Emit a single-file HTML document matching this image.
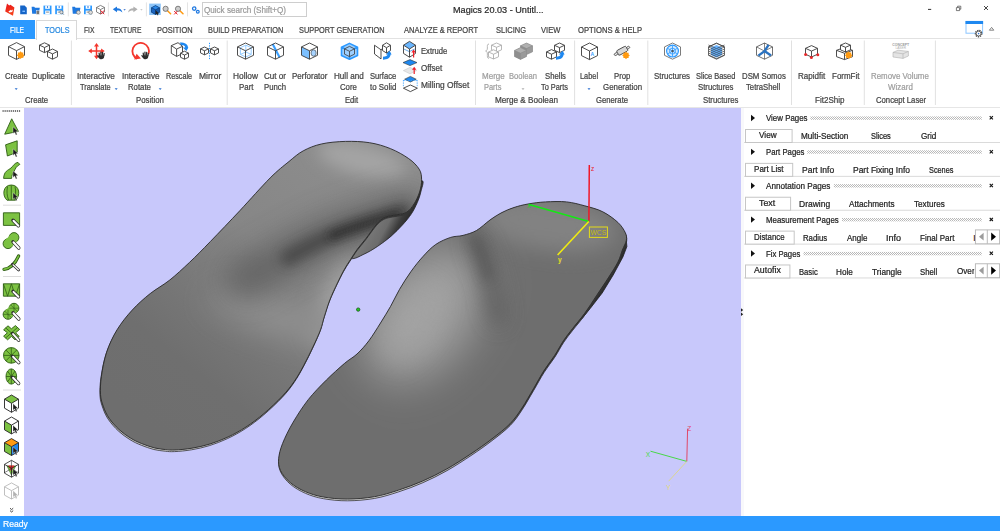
<!DOCTYPE html>
<html><head><meta charset="utf-8"><title>Magics 20.03</title>
<style>
html,body{margin:0;padding:0;}
body{width:1000px;height:531px;overflow:hidden;background:#fff;position:relative;font-family:"Liberation Sans",sans-serif;}
.t{position:absolute;white-space:nowrap;transform-origin:0 50%;display:block;-webkit-text-stroke:0.22px currentColor;}
.a{position:absolute;}
svg{position:absolute;left:0;top:0;overflow:visible;}
</style></head><body>
<div class="a" style="left:0;top:0;width:1000px;height:531px;background:#fff"></div>
<div class="a" style="left:24px;top:108px;width:717px;height:408px;background:#c8c8fb"></div>
<div class="a" style="left:0;top:107px;width:1000px;height:1px;background:#e6e6e6"></div>
<div class="a" style="left:0;top:516px;width:1000px;height:15px;background:#2b99ff"></div>
<div class="a" style="left:0;top:38px;width:1000px;height:1px;background:#e2e2e2"></div>
<div class="a" style="left:0;top:20px;width:35px;height:18.5px;background:#2b99ff"></div>
<div class="a" style="left:36px;top:20px;width:39px;height:19px;background:#fff;border:1px solid #d8d8d8;border-bottom:none"></div>
<div class="a" style="left:201.5px;top:2px;width:103px;height:13px;border:1px solid #cecece;background:#fff"></div>
<svg width="1000" height="531" viewBox="0 0 1000 531">
<defs>
<clipPath id="vp"><rect x="24" y="108" width="717" height="408"/></clipPath>
<clipPath id="cL"><path d="M100.5,394.5C100.2,389.4 100.4,383.4 101.4,376.4C102.4,369.4 104.0,360.1 106.6,352.3C109.2,344.5 112.8,336.7 117.1,329.7C121.4,322.7 126.7,316.1 132.2,310.1C137.7,304.1 143.9,298.6 150.2,293.6C156.5,288.6 163.3,285.2 169.8,280.0C176.3,274.8 182.6,268.9 189.4,262.5C196.2,256.1 202.1,250.1 210.5,241.4C218.9,232.7 230.1,221.1 240.0,210.5C249.9,199.9 261.9,186.2 270.1,178.0C278.3,169.8 283.5,166.0 289.0,161.5C294.5,157.0 297.9,153.7 303.3,150.8C308.7,147.9 314.3,145.6 321.3,144.0C328.3,142.4 337.4,141.6 345.4,141.4C353.4,141.2 362.0,141.5 369.5,142.7C377.0,143.9 384.1,146.0 390.6,148.7C397.1,151.3 403.9,155.2 408.7,158.6C413.5,162.0 417.0,165.7 419.2,169.2C421.4,172.7 421.5,175.9 421.6,179.7C421.7,183.5 420.9,187.9 419.6,192.0C418.3,196.1 416.1,200.7 414.0,204.0C411.9,207.3 409.7,210.2 407.0,212.0C404.3,213.8 401.0,213.9 398.0,214.6C395.0,215.3 391.5,215.4 388.8,216.2C386.1,217.0 384.3,217.6 382.0,219.2C379.7,220.8 377.8,222.8 375.2,226.0C372.6,229.2 369.2,234.3 366.2,238.2C363.2,242.1 359.7,245.9 357.1,249.5C354.5,253.1 352.6,256.3 350.4,259.7C348.2,263.1 346.1,266.1 344.0,270.0C341.9,273.9 339.9,277.9 337.5,282.9C335.1,287.9 332.1,294.1 329.9,299.8C327.7,305.5 325.9,311.8 324.3,316.8C322.7,321.8 322.4,324.9 320.5,329.9C318.6,334.9 315.8,340.9 313.0,346.9C310.2,352.9 306.7,359.9 303.6,365.7C300.5,371.5 297.7,376.4 294.2,381.5C290.7,386.6 287.5,390.7 282.5,396.0C277.5,401.3 270.1,408.3 264.0,413.5C257.9,418.7 252.0,423.1 246.0,427.0C240.0,430.9 234.0,434.2 228.0,437.0C222.0,439.8 216.0,442.1 210.0,444.0C204.0,445.9 197.8,447.2 192.0,448.2C186.2,449.2 179.4,449.8 175.0,450.0C170.6,450.2 169.1,450.0 165.7,449.6C162.3,449.2 158.4,448.9 154.4,447.9C150.4,446.9 145.7,445.2 141.7,443.6C137.7,442.0 134.2,440.4 130.4,438.0C126.6,435.6 122.5,432.8 119.0,429.5C115.5,426.2 111.7,422.0 109.1,418.2C106.5,414.4 104.9,410.8 103.5,406.9C102.1,402.9 100.8,399.6 100.5,394.5Z"/></clipPath>
<clipPath id="cR"><path d="M278.7,458.4C279.1,453.9 280.2,449.4 282.6,443.4C285.0,437.4 288.8,429.6 293.1,422.3C297.4,415.0 302.7,406.7 308.2,399.7C313.7,392.7 320.3,386.1 326.3,380.1C332.3,374.1 339.2,368.0 344.3,363.6C349.4,359.2 352.9,357.8 357.0,354.0C361.1,350.2 365.1,345.8 369.0,340.6C372.9,335.4 376.9,328.7 380.5,323.0C384.1,317.3 387.3,312.1 390.5,306.5C393.7,300.9 396.1,295.2 399.5,289.4C402.9,283.6 407.1,277.0 411.0,271.5C414.9,266.0 418.9,261.0 423.0,256.5C427.1,252.0 431.1,247.7 435.7,244.5C440.3,241.3 446.1,238.9 450.7,237.4C455.2,235.9 458.7,236.6 463.0,235.4C467.3,234.2 472.0,233.1 476.5,230.5C481.0,227.9 485.8,223.0 490.0,220.0C494.2,217.0 498.0,214.6 502.0,212.5C506.0,210.4 509.7,208.9 514.0,207.5C518.3,206.1 522.8,204.9 528.0,204.0C533.2,203.1 539.1,202.2 545.5,201.9C551.9,201.6 560.1,201.2 566.6,201.9C573.1,202.6 578.7,204.2 584.7,205.8C590.7,207.5 597.3,209.0 602.8,211.8C608.3,214.6 614.1,218.9 617.9,222.4C621.7,225.9 624.0,229.9 625.4,232.9C626.8,235.9 626.8,237.7 626.3,240.5C625.8,243.3 623.8,246.4 622.4,250.0C621.0,253.6 620.2,257.6 617.9,262.1C615.6,266.6 612.3,271.6 608.8,277.1C605.3,282.6 600.8,289.2 596.8,295.2C592.8,301.2 588.7,307.8 584.7,313.3C580.7,318.8 576.2,323.9 572.7,328.4C569.2,332.9 566.6,336.0 563.6,340.5C560.6,345.0 557.9,350.5 554.6,355.5C551.3,360.5 547.5,365.1 544.0,370.6C540.5,376.1 537.2,382.5 533.5,388.7C529.8,394.9 525.9,402.1 522.0,408.0C518.1,413.9 515.0,418.7 510.0,423.8C505.0,428.9 498.4,433.9 491.9,438.9C485.4,443.9 478.3,448.9 470.8,453.9C463.3,458.9 454.7,464.5 446.7,469.0C438.7,473.5 430.7,477.5 422.7,481.0C414.7,484.5 406.6,487.5 398.6,490.1C390.6,492.7 383.1,495.2 374.5,496.7C365.9,498.2 355.8,499.1 347.3,499.1C338.8,499.2 330.3,498.2 323.3,497.0C316.3,495.8 310.7,494.0 305.2,491.6C299.7,489.2 294.2,486.0 290.1,482.5C286.0,479.0 282.4,474.5 280.5,470.5C278.6,466.5 278.3,462.9 278.7,458.4Z"/></clipPath>
<filter id="b4" filterUnits="userSpaceOnUse" x="0" y="100" width="800" height="450"><feGaussianBlur stdDeviation="4"/></filter>
<filter id="b6" filterUnits="userSpaceOnUse" x="0" y="100" width="800" height="450"><feGaussianBlur stdDeviation="6"/></filter>
<filter id="b10" filterUnits="userSpaceOnUse" x="0" y="100" width="800" height="450"><feGaussianBlur stdDeviation="10"/></filter>
<filter id="b8" filterUnits="userSpaceOnUse" x="0" y="100" width="800" height="450"><feGaussianBlur stdDeviation="8"/></filter>
<filter id="b14" filterUnits="userSpaceOnUse" x="0" y="100" width="800" height="450"><feGaussianBlur stdDeviation="14"/></filter>
<filter id="b22" filterUnits="userSpaceOnUse" x="0" y="100" width="800" height="450"><feGaussianBlur stdDeviation="22"/></filter>
<linearGradient id="gLu" x1="422" y1="196" x2="392" y2="180" gradientUnits="userSpaceOnUse"><stop offset="0" stop-color="#2a2a2a"/><stop offset="0.22" stop-color="#3c3c3c"/><stop offset="0.5" stop-color="#6c6c6c"/><stop offset="1" stop-color="#7c7c7c"/></linearGradient>
<linearGradient id="gL" x1="370" y1="150" x2="150" y2="425" gradientUnits="userSpaceOnUse"><stop offset="0" stop-color="#8e8e8e"/><stop offset="0.4" stop-color="#868686"/><stop offset="0.62" stop-color="#787878"/><stop offset="0.8" stop-color="#6f6f6f"/><stop offset="1" stop-color="#6e6e6e"/></linearGradient>
<clipPath id="eL"><rect x="90" y="385" width="230" height="80"/></clipPath><clipPath id="eR"><rect x="270" y="395" width="270" height="120"/></clipPath>
<linearGradient id="geL" x1="0" y1="385" x2="0" y2="450" gradientUnits="userSpaceOnUse"><stop offset="0" stop-color="#3a3a3a"/><stop offset="0.45" stop-color="#909090"/><stop offset="1" stop-color="#d4d4d4"/></linearGradient>
<linearGradient id="geR" x1="0" y1="400" x2="0" y2="500" gradientUnits="userSpaceOnUse"><stop offset="0" stop-color="#3a3a3a"/><stop offset="0.4" stop-color="#8a8a8a"/><stop offset="1" stop-color="#d8d8d8"/></linearGradient>
</defs>
<g clip-path="url(#vp)">
<path d="M421.6,181.0C425.1,179.7 421.5,188.4 420.8,192.0C420.1,195.6 418.9,198.9 417.3,202.5C415.7,206.1 413.9,210.1 411.4,213.8C408.9,217.6 405.8,221.3 402.4,225.0C399.0,228.7 395.2,232.6 391.1,236.2C387.0,239.8 382.0,243.4 377.5,246.4C373.0,249.4 368.3,252.2 363.9,254.2C359.5,256.2 355.0,259.3 351.0,258.6C347.0,257.9 338.5,255.6 340.0,250.0C341.5,244.4 350.0,233.3 360.0,225.0C370.0,216.7 389.7,207.3 400.0,200.0C410.3,192.7 418.1,182.3 421.6,181.0Z" fill="url(#gLu)" stroke="#222" stroke-width="0.8"/>
<path d="M100.5,394.5C100.2,389.4 100.4,383.4 101.4,376.4C102.4,369.4 104.0,360.1 106.6,352.3C109.2,344.5 112.8,336.7 117.1,329.7C121.4,322.7 126.7,316.1 132.2,310.1C137.7,304.1 143.9,298.6 150.2,293.6C156.5,288.6 163.3,285.2 169.8,280.0C176.3,274.8 182.6,268.9 189.4,262.5C196.2,256.1 202.1,250.1 210.5,241.4C218.9,232.7 230.1,221.1 240.0,210.5C249.9,199.9 261.9,186.2 270.1,178.0C278.3,169.8 283.5,166.0 289.0,161.5C294.5,157.0 297.9,153.7 303.3,150.8C308.7,147.9 314.3,145.6 321.3,144.0C328.3,142.4 337.4,141.6 345.4,141.4C353.4,141.2 362.0,141.5 369.5,142.7C377.0,143.9 384.1,146.0 390.6,148.7C397.1,151.3 403.9,155.2 408.7,158.6C413.5,162.0 417.0,165.7 419.2,169.2C421.4,172.7 421.5,175.9 421.6,179.7C421.7,183.5 420.9,187.9 419.6,192.0C418.3,196.1 416.1,200.7 414.0,204.0C411.9,207.3 409.7,210.2 407.0,212.0C404.3,213.8 401.0,213.9 398.0,214.6C395.0,215.3 391.5,215.4 388.8,216.2C386.1,217.0 384.3,217.6 382.0,219.2C379.7,220.8 377.8,222.8 375.2,226.0C372.6,229.2 369.2,234.3 366.2,238.2C363.2,242.1 359.7,245.9 357.1,249.5C354.5,253.1 352.6,256.3 350.4,259.7C348.2,263.1 346.1,266.1 344.0,270.0C341.9,273.9 339.9,277.9 337.5,282.9C335.1,287.9 332.1,294.1 329.9,299.8C327.7,305.5 325.9,311.8 324.3,316.8C322.7,321.8 322.4,324.9 320.5,329.9C318.6,334.9 315.8,340.9 313.0,346.9C310.2,352.9 306.7,359.9 303.6,365.7C300.5,371.5 297.7,376.4 294.2,381.5C290.7,386.6 287.5,390.7 282.5,396.0C277.5,401.3 270.1,408.3 264.0,413.5C257.9,418.7 252.0,423.1 246.0,427.0C240.0,430.9 234.0,434.2 228.0,437.0C222.0,439.8 216.0,442.1 210.0,444.0C204.0,445.9 197.8,447.2 192.0,448.2C186.2,449.2 179.4,449.8 175.0,450.0C170.6,450.2 169.1,450.0 165.7,449.6C162.3,449.2 158.4,448.9 154.4,447.9C150.4,446.9 145.7,445.2 141.7,443.6C137.7,442.0 134.2,440.4 130.4,438.0C126.6,435.6 122.5,432.8 119.0,429.5C115.5,426.2 111.7,422.0 109.1,418.2C106.5,414.4 104.9,410.8 103.5,406.9C102.1,402.9 100.8,399.6 100.5,394.5Z" transform="translate(-0.5,1.6)" fill="url(#geL)" stroke="#333" stroke-width="0.8"/>
<path d="M100.5,394.5C100.2,389.4 100.4,383.4 101.4,376.4C102.4,369.4 104.0,360.1 106.6,352.3C109.2,344.5 112.8,336.7 117.1,329.7C121.4,322.7 126.7,316.1 132.2,310.1C137.7,304.1 143.9,298.6 150.2,293.6C156.5,288.6 163.3,285.2 169.8,280.0C176.3,274.8 182.6,268.9 189.4,262.5C196.2,256.1 202.1,250.1 210.5,241.4C218.9,232.7 230.1,221.1 240.0,210.5C249.9,199.9 261.9,186.2 270.1,178.0C278.3,169.8 283.5,166.0 289.0,161.5C294.5,157.0 297.9,153.7 303.3,150.8C308.7,147.9 314.3,145.6 321.3,144.0C328.3,142.4 337.4,141.6 345.4,141.4C353.4,141.2 362.0,141.5 369.5,142.7C377.0,143.9 384.1,146.0 390.6,148.7C397.1,151.3 403.9,155.2 408.7,158.6C413.5,162.0 417.0,165.7 419.2,169.2C421.4,172.7 421.5,175.9 421.6,179.7C421.7,183.5 420.9,187.9 419.6,192.0C418.3,196.1 416.1,200.7 414.0,204.0C411.9,207.3 409.7,210.2 407.0,212.0C404.3,213.8 401.0,213.9 398.0,214.6C395.0,215.3 391.5,215.4 388.8,216.2C386.1,217.0 384.3,217.6 382.0,219.2C379.7,220.8 377.8,222.8 375.2,226.0C372.6,229.2 369.2,234.3 366.2,238.2C363.2,242.1 359.7,245.9 357.1,249.5C354.5,253.1 352.6,256.3 350.4,259.7C348.2,263.1 346.1,266.1 344.0,270.0C341.9,273.9 339.9,277.9 337.5,282.9C335.1,287.9 332.1,294.1 329.9,299.8C327.7,305.5 325.9,311.8 324.3,316.8C322.7,321.8 322.4,324.9 320.5,329.9C318.6,334.9 315.8,340.9 313.0,346.9C310.2,352.9 306.7,359.9 303.6,365.7C300.5,371.5 297.7,376.4 294.2,381.5C290.7,386.6 287.5,390.7 282.5,396.0C277.5,401.3 270.1,408.3 264.0,413.5C257.9,418.7 252.0,423.1 246.0,427.0C240.0,430.9 234.0,434.2 228.0,437.0C222.0,439.8 216.0,442.1 210.0,444.0C204.0,445.9 197.8,447.2 192.0,448.2C186.2,449.2 179.4,449.8 175.0,450.0C170.6,450.2 169.1,450.0 165.7,449.6C162.3,449.2 158.4,448.9 154.4,447.9C150.4,446.9 145.7,445.2 141.7,443.6C137.7,442.0 134.2,440.4 130.4,438.0C126.6,435.6 122.5,432.8 119.0,429.5C115.5,426.2 111.7,422.0 109.1,418.2C106.5,414.4 104.9,410.8 103.5,406.9C102.1,402.9 100.8,399.6 100.5,394.5Z" fill="url(#gL)"/>
<g clip-path="url(#cL)">
<ellipse cx="362" cy="160" rx="46" ry="15" fill="#a4a4a4" filter="url(#b8)" transform="rotate(14 362 160)"/>
<path d="M350,268 C337,288 328,308 322,332" fill="none" stroke="#a2a2a2" stroke-width="24" stroke-linecap="round" filter="url(#b10)"/>
<ellipse cx="280" cy="316" rx="72" ry="20" fill="#8e8e8e" filter="url(#b14)" transform="rotate(16 280 316)"/>
<path d="M408,208 C385,217 345,226 314,242 C295,252 275,262 245,280" fill="none" stroke="#505050" stroke-width="40" stroke-linecap="round" filter="url(#b14)" opacity="0.55"/>
<path d="M404,211 C385,218 348,227 320,241 C308,247 298,252 288,258" fill="none" stroke="#3c3c3c" stroke-width="16" stroke-linecap="round" filter="url(#b6)" opacity="0.7"/>
<path d="M398,214 C380,220 352,227 332,236" fill="none" stroke="#2c2c2c" stroke-width="7" stroke-linecap="round" filter="url(#b4)" opacity="0.85"/>
</g>
<path d="M100.5,394.5C100.2,389.4 100.4,383.4 101.4,376.4C102.4,369.4 104.0,360.1 106.6,352.3C109.2,344.5 112.8,336.7 117.1,329.7C121.4,322.7 126.7,316.1 132.2,310.1C137.7,304.1 143.9,298.6 150.2,293.6C156.5,288.6 163.3,285.2 169.8,280.0C176.3,274.8 182.6,268.9 189.4,262.5C196.2,256.1 202.1,250.1 210.5,241.4C218.9,232.7 230.1,221.1 240.0,210.5C249.9,199.9 261.9,186.2 270.1,178.0C278.3,169.8 283.5,166.0 289.0,161.5C294.5,157.0 297.9,153.7 303.3,150.8C308.7,147.9 314.3,145.6 321.3,144.0C328.3,142.4 337.4,141.6 345.4,141.4C353.4,141.2 362.0,141.5 369.5,142.7C377.0,143.9 384.1,146.0 390.6,148.7C397.1,151.3 403.9,155.2 408.7,158.6C413.5,162.0 417.0,165.7 419.2,169.2C421.4,172.7 421.5,175.9 421.6,179.7C421.7,183.5 420.9,187.9 419.6,192.0C418.3,196.1 416.1,200.7 414.0,204.0C411.9,207.3 409.7,210.2 407.0,212.0C404.3,213.8 401.0,213.9 398.0,214.6C395.0,215.3 391.5,215.4 388.8,216.2C386.1,217.0 384.3,217.6 382.0,219.2C379.7,220.8 377.8,222.8 375.2,226.0C372.6,229.2 369.2,234.3 366.2,238.2C363.2,242.1 359.7,245.9 357.1,249.5C354.5,253.1 352.6,256.3 350.4,259.7C348.2,263.1 346.1,266.1 344.0,270.0C341.9,273.9 339.9,277.9 337.5,282.9C335.1,287.9 332.1,294.1 329.9,299.8C327.7,305.5 325.9,311.8 324.3,316.8C322.7,321.8 322.4,324.9 320.5,329.9C318.6,334.9 315.8,340.9 313.0,346.9C310.2,352.9 306.7,359.9 303.6,365.7C300.5,371.5 297.7,376.4 294.2,381.5C290.7,386.6 287.5,390.7 282.5,396.0C277.5,401.3 270.1,408.3 264.0,413.5C257.9,418.7 252.0,423.1 246.0,427.0C240.0,430.9 234.0,434.2 228.0,437.0C222.0,439.8 216.0,442.1 210.0,444.0C204.0,445.9 197.8,447.2 192.0,448.2C186.2,449.2 179.4,449.8 175.0,450.0C170.6,450.2 169.1,450.0 165.7,449.6C162.3,449.2 158.4,448.9 154.4,447.9C150.4,446.9 145.7,445.2 141.7,443.6C137.7,442.0 134.2,440.4 130.4,438.0C126.6,435.6 122.5,432.8 119.0,429.5C115.5,426.2 111.7,422.0 109.1,418.2C106.5,414.4 104.9,410.8 103.5,406.9C102.1,402.9 100.8,399.6 100.5,394.5Z" fill="none" stroke="#2a2a2a" stroke-width="0.9"/>
<path d="M626.3,240.5 L626.9,246.5 L622.9,257 L613.2,275 L602.2,293 L590.2,308.5 L582,318.5 L584.7,313.3 L596.8,295.2 L608.8,277.1 L617.9,262.1 L622.4,250Z" fill="#2e2e2e" stroke="#222" stroke-width="0.8"/>
<path d="M278.7,458.4C279.1,453.9 280.2,449.4 282.6,443.4C285.0,437.4 288.8,429.6 293.1,422.3C297.4,415.0 302.7,406.7 308.2,399.7C313.7,392.7 320.3,386.1 326.3,380.1C332.3,374.1 339.2,368.0 344.3,363.6C349.4,359.2 352.9,357.8 357.0,354.0C361.1,350.2 365.1,345.8 369.0,340.6C372.9,335.4 376.9,328.7 380.5,323.0C384.1,317.3 387.3,312.1 390.5,306.5C393.7,300.9 396.1,295.2 399.5,289.4C402.9,283.6 407.1,277.0 411.0,271.5C414.9,266.0 418.9,261.0 423.0,256.5C427.1,252.0 431.1,247.7 435.7,244.5C440.3,241.3 446.1,238.9 450.7,237.4C455.2,235.9 458.7,236.6 463.0,235.4C467.3,234.2 472.0,233.1 476.5,230.5C481.0,227.9 485.8,223.0 490.0,220.0C494.2,217.0 498.0,214.6 502.0,212.5C506.0,210.4 509.7,208.9 514.0,207.5C518.3,206.1 522.8,204.9 528.0,204.0C533.2,203.1 539.1,202.2 545.5,201.9C551.9,201.6 560.1,201.2 566.6,201.9C573.1,202.6 578.7,204.2 584.7,205.8C590.7,207.5 597.3,209.0 602.8,211.8C608.3,214.6 614.1,218.9 617.9,222.4C621.7,225.9 624.0,229.9 625.4,232.9C626.8,235.9 626.8,237.7 626.3,240.5C625.8,243.3 623.8,246.4 622.4,250.0C621.0,253.6 620.2,257.6 617.9,262.1C615.6,266.6 612.3,271.6 608.8,277.1C605.3,282.6 600.8,289.2 596.8,295.2C592.8,301.2 588.7,307.8 584.7,313.3C580.7,318.8 576.2,323.9 572.7,328.4C569.2,332.9 566.6,336.0 563.6,340.5C560.6,345.0 557.9,350.5 554.6,355.5C551.3,360.5 547.5,365.1 544.0,370.6C540.5,376.1 537.2,382.5 533.5,388.7C529.8,394.9 525.9,402.1 522.0,408.0C518.1,413.9 515.0,418.7 510.0,423.8C505.0,428.9 498.4,433.9 491.9,438.9C485.4,443.9 478.3,448.9 470.8,453.9C463.3,458.9 454.7,464.5 446.7,469.0C438.7,473.5 430.7,477.5 422.7,481.0C414.7,484.5 406.6,487.5 398.6,490.1C390.6,492.7 383.1,495.2 374.5,496.7C365.9,498.2 355.8,499.1 347.3,499.1C338.8,499.2 330.3,498.2 323.3,497.0C316.3,495.8 310.7,494.0 305.2,491.6C299.7,489.2 294.2,486.0 290.1,482.5C286.0,479.0 282.4,474.5 280.5,470.5C278.6,466.5 278.3,462.9 278.7,458.4Z" transform="translate(0.2,1.7)" fill="url(#geR)" stroke="#333" stroke-width="0.8"/>
<path d="M278.7,458.4C279.1,453.9 280.2,449.4 282.6,443.4C285.0,437.4 288.8,429.6 293.1,422.3C297.4,415.0 302.7,406.7 308.2,399.7C313.7,392.7 320.3,386.1 326.3,380.1C332.3,374.1 339.2,368.0 344.3,363.6C349.4,359.2 352.9,357.8 357.0,354.0C361.1,350.2 365.1,345.8 369.0,340.6C372.9,335.4 376.9,328.7 380.5,323.0C384.1,317.3 387.3,312.1 390.5,306.5C393.7,300.9 396.1,295.2 399.5,289.4C402.9,283.6 407.1,277.0 411.0,271.5C414.9,266.0 418.9,261.0 423.0,256.5C427.1,252.0 431.1,247.7 435.7,244.5C440.3,241.3 446.1,238.9 450.7,237.4C455.2,235.9 458.7,236.6 463.0,235.4C467.3,234.2 472.0,233.1 476.5,230.5C481.0,227.9 485.8,223.0 490.0,220.0C494.2,217.0 498.0,214.6 502.0,212.5C506.0,210.4 509.7,208.9 514.0,207.5C518.3,206.1 522.8,204.9 528.0,204.0C533.2,203.1 539.1,202.2 545.5,201.9C551.9,201.6 560.1,201.2 566.6,201.9C573.1,202.6 578.7,204.2 584.7,205.8C590.7,207.5 597.3,209.0 602.8,211.8C608.3,214.6 614.1,218.9 617.9,222.4C621.7,225.9 624.0,229.9 625.4,232.9C626.8,235.9 626.8,237.7 626.3,240.5C625.8,243.3 623.8,246.4 622.4,250.0C621.0,253.6 620.2,257.6 617.9,262.1C615.6,266.6 612.3,271.6 608.8,277.1C605.3,282.6 600.8,289.2 596.8,295.2C592.8,301.2 588.7,307.8 584.7,313.3C580.7,318.8 576.2,323.9 572.7,328.4C569.2,332.9 566.6,336.0 563.6,340.5C560.6,345.0 557.9,350.5 554.6,355.5C551.3,360.5 547.5,365.1 544.0,370.6C540.5,376.1 537.2,382.5 533.5,388.7C529.8,394.9 525.9,402.1 522.0,408.0C518.1,413.9 515.0,418.7 510.0,423.8C505.0,428.9 498.4,433.9 491.9,438.9C485.4,443.9 478.3,448.9 470.8,453.9C463.3,458.9 454.7,464.5 446.7,469.0C438.7,473.5 430.7,477.5 422.7,481.0C414.7,484.5 406.6,487.5 398.6,490.1C390.6,492.7 383.1,495.2 374.5,496.7C365.9,498.2 355.8,499.1 347.3,499.1C338.8,499.2 330.3,498.2 323.3,497.0C316.3,495.8 310.7,494.0 305.2,491.6C299.7,489.2 294.2,486.0 290.1,482.5C286.0,479.0 282.4,474.5 280.5,470.5C278.6,466.5 278.3,462.9 278.7,458.4Z" fill="#6e6e6e"/>
<g clip-path="url(#cR)">
<ellipse cx="424" cy="314" rx="48" ry="76" fill="#a2a2a2" filter="url(#b22)" transform="rotate(36 424 314)"/>
<ellipse cx="408" cy="322" rx="22" ry="40" fill="#a4a4a4" filter="url(#b14)" transform="rotate(32 408 322)" opacity="0.5"/>
<ellipse cx="548" cy="224" rx="70" ry="26" fill="#828282" filter="url(#b10)" transform="rotate(8 548 224)"/>
<path d="M476,240 C484,258 492,280 498,318" fill="none" stroke="#5a5a5a" stroke-width="17" stroke-linecap="round" filter="url(#b10)" opacity="0.8"/>
<path d="M474,238 C480,250 485,262 488,276" fill="none" stroke="#505050" stroke-width="8" stroke-linecap="round" filter="url(#b6)" opacity="0.7"/>
</g>
<path d="M278.7,458.4C279.1,453.9 280.2,449.4 282.6,443.4C285.0,437.4 288.8,429.6 293.1,422.3C297.4,415.0 302.7,406.7 308.2,399.7C313.7,392.7 320.3,386.1 326.3,380.1C332.3,374.1 339.2,368.0 344.3,363.6C349.4,359.2 352.9,357.8 357.0,354.0C361.1,350.2 365.1,345.8 369.0,340.6C372.9,335.4 376.9,328.7 380.5,323.0C384.1,317.3 387.3,312.1 390.5,306.5C393.7,300.9 396.1,295.2 399.5,289.4C402.9,283.6 407.1,277.0 411.0,271.5C414.9,266.0 418.9,261.0 423.0,256.5C427.1,252.0 431.1,247.7 435.7,244.5C440.3,241.3 446.1,238.9 450.7,237.4C455.2,235.9 458.7,236.6 463.0,235.4C467.3,234.2 472.0,233.1 476.5,230.5C481.0,227.9 485.8,223.0 490.0,220.0C494.2,217.0 498.0,214.6 502.0,212.5C506.0,210.4 509.7,208.9 514.0,207.5C518.3,206.1 522.8,204.9 528.0,204.0C533.2,203.1 539.1,202.2 545.5,201.9C551.9,201.6 560.1,201.2 566.6,201.9C573.1,202.6 578.7,204.2 584.7,205.8C590.7,207.5 597.3,209.0 602.8,211.8C608.3,214.6 614.1,218.9 617.9,222.4C621.7,225.9 624.0,229.9 625.4,232.9C626.8,235.9 626.8,237.7 626.3,240.5C625.8,243.3 623.8,246.4 622.4,250.0C621.0,253.6 620.2,257.6 617.9,262.1C615.6,266.6 612.3,271.6 608.8,277.1C605.3,282.6 600.8,289.2 596.8,295.2C592.8,301.2 588.7,307.8 584.7,313.3C580.7,318.8 576.2,323.9 572.7,328.4C569.2,332.9 566.6,336.0 563.6,340.5C560.6,345.0 557.9,350.5 554.6,355.5C551.3,360.5 547.5,365.1 544.0,370.6C540.5,376.1 537.2,382.5 533.5,388.7C529.8,394.9 525.9,402.1 522.0,408.0C518.1,413.9 515.0,418.7 510.0,423.8C505.0,428.9 498.4,433.9 491.9,438.9C485.4,443.9 478.3,448.9 470.8,453.9C463.3,458.9 454.7,464.5 446.7,469.0C438.7,473.5 430.7,477.5 422.7,481.0C414.7,484.5 406.6,487.5 398.6,490.1C390.6,492.7 383.1,495.2 374.5,496.7C365.9,498.2 355.8,499.1 347.3,499.1C338.8,499.2 330.3,498.2 323.3,497.0C316.3,495.8 310.7,494.0 305.2,491.6C299.7,489.2 294.2,486.0 290.1,482.5C286.0,479.0 282.4,474.5 280.5,470.5C278.6,466.5 278.3,462.9 278.7,458.4Z" fill="none" stroke="#2a2a2a" stroke-width="0.9"/>
<circle cx="358.2" cy="309.6" r="1.7" fill="#22cc22" stroke="#114411" stroke-width="0.7"/>
<path d="M588.9,221.5 L589.3,165" stroke="#f01828" stroke-width="1.5" fill="none"/>
<path d="M588.8,221.5 L529,204.5" stroke="#14e814" stroke-width="1.6" fill="none"/>
<path d="M588.8,221.5 L557.6,255" stroke="#f0ec10" stroke-width="1.6" fill="none"/>
<rect x="589.4" y="227" width="18" height="10.4" fill="none" stroke="#e4dc18" stroke-width="1"/>
<text x="590.6" y="235.4" font-family="Liberation Sans, sans-serif" font-size="7" fill="#c4bc10" textLength="15.5" lengthAdjust="spacingAndGlyphs">WCS</text>
<text x="591" y="171" font-family="Liberation Sans, sans-serif" font-size="6.5" fill="#e8202a">z</text>
<text x="527.5" y="207.6" font-family="Liberation Sans, sans-serif" font-size="6.5" fill="#20d020">x</text>
<text x="558" y="262" font-family="Liberation Sans, sans-serif" font-size="6.5" font-weight="bold" fill="#e8e020">y</text>
<path d="M686.8,461.4 L687.6,428.6" stroke="#e04868" stroke-width="1" fill="none"/>
<path d="M686.8,461.4 L650.5,451.2" stroke="#48d848" stroke-width="1" fill="none"/>
<path d="M686.8,461.4 L668.6,481.2" stroke="#dcd690" stroke-width="1" fill="none"/>
<text x="687.3" y="430.5" font-family="Liberation Sans, sans-serif" font-size="6.5" fill="#e04868">Z</text>
<text x="645.8" y="456.6" font-family="Liberation Sans, sans-serif" font-size="6.5" fill="#48d848">X</text>
<text x="666.2" y="490.2" font-family="Liberation Sans, sans-serif" font-size="6.5" fill="#e4dc70">Y</text>
</g></svg>
<svg width="1000" height="531" viewBox="0 0 1000 531">
<path d="M71.4,40.5 L71.4,105" stroke="#e1e1e1" stroke-width="1"/>
<path d="M227.2,40.5 L227.2,105" stroke="#e1e1e1" stroke-width="1"/>
<path d="M475.5,40.5 L475.5,105" stroke="#e1e1e1" stroke-width="1"/>
<path d="M574.6,40.5 L574.6,105" stroke="#e1e1e1" stroke-width="1"/>
<path d="M647.8,40.5 L647.8,105" stroke="#e1e1e1" stroke-width="1"/>
<path d="M791.5,40.5 L791.5,105" stroke="#e1e1e1" stroke-width="1"/>
<path d="M864.3,40.5 L864.3,105" stroke="#e1e1e1" stroke-width="1"/>
<path d="M935.4,40.5 L935.4,105" stroke="#e1e1e1" stroke-width="1"/>
<path d="M14.7,88.2 L17.7,88.2 L16.2,89.9Z" fill="#2b6fd0"/>
<path d="M114.7,88.2 L117.7,88.2 L116.2,89.9Z" fill="#2b6fd0"/>
<path d="M158.7,88.2 L161.7,88.2 L160.2,89.9Z" fill="#2b6fd0"/>
<path d="M587.5,88.2 L590.5,88.2 L589,89.9Z" fill="#2b6fd0"/>
<path d="M521.5,88.2 L524.5,88.2 L523,89.9Z" fill="#b0b0b0"/>
<path d="M16.50,42.60 L24.50,46.63 L24.50,55.37 L16.50,59.40 L8.50,55.37 L8.50,46.63Z" fill="#fff" stroke="none"/><path d="M16.50,42.60 L24.50,46.63 L24.50,55.37 L16.50,59.40 L8.50,55.37 L8.50,46.63Z M8.50,46.63 L16.50,50.66 L24.50,46.63 M16.50,50.66 L16.50,59.40" fill="none" stroke="#3a3a3a" stroke-width="0.9" stroke-linejoin="round"/>
<polygon points="24.50,55.20 23.19,56.27 23.36,57.96 21.67,57.79 20.60,59.10 19.53,57.79 17.84,57.96 18.01,56.27 16.70,55.20 18.01,54.13 17.84,52.44 19.53,52.61 20.60,51.30 21.67,52.61 23.36,52.44 23.19,54.13" fill="#ff9a10"/>
<path d="M44.50,42.80 L49.50,45.15 L49.50,50.25 L44.50,52.60 L39.50,50.25 L39.50,45.15Z" fill="#fff" stroke="none"/><path d="M44.50,42.80 L49.50,45.15 L49.50,50.25 L44.50,52.60 L39.50,50.25 L39.50,45.15Z M39.50,45.15 L44.50,47.50 L49.50,45.15 M44.50,47.50 L44.50,52.60" fill="none" stroke="#3a3a3a" stroke-width="0.9" stroke-linejoin="round"/>
<path d="M52.50,49.00 L57.50,51.45 L57.50,56.75 L52.50,59.20 L47.50,56.75 L47.50,51.45Z" fill="#fff" stroke="none"/><path d="M52.50,49.00 L57.50,51.45 L57.50,56.75 L52.50,59.20 L47.50,56.75 L47.50,51.45Z M47.50,51.45 L52.50,53.90 L57.50,51.45 M52.50,53.90 L52.50,59.20" fill="none" stroke="#3a3a3a" stroke-width="0.9" stroke-linejoin="round"/>
<g fill="#f4362c"><path d="M96.5,45.5 L96.5,57 M90.6,50.9 L102.4,50.9" fill="none" stroke="#f4362c" stroke-width="1.5"/><path d="M96.5,43 L99,46.6 L94,46.6Z M96.5,59.3 L99,55.7 L94,55.7Z M88.2,50.9 L91.8,48.4 L91.8,53.4Z M104.7,50.9 L101.1,48.4 L101.1,53.4Z"/></g>
<g transform="translate(97,51.2) scale(1.0)" fill="#2c2c2c" stroke="#2c2c2c" stroke-linecap="round"><path d="M1.7,4 L7.3,4 L7,6.4 C6.6,7.6 5.6,8 4.4,8 C3,8 2.2,7.4 1.7,6.2Z" stroke="none"/><path d="M2.5,4.4 L2.1,1.9 M3.95,4 L3.85,0.9 M5.4,4 L5.6,1.1 M6.7,4.6 L7.2,2.5" stroke-width="1.25" fill="none"/><path d="M2.4,6.4 L0.8,4.5" stroke-width="1.3" fill="none"/></g>
<path d="M148.5,54.04 A8.3,8.3 0 1 0 137.19,58.72" fill="none" stroke="#f4362c" stroke-width="1.8"/>
<path d="M134.2,59.5 L140.9,58.6 L136.6,53.7Z" fill="#f4362c"/>
<g transform="translate(141.1,51.2) scale(1.0)" fill="#2c2c2c" stroke="#2c2c2c" stroke-linecap="round"><path d="M1.7,4 L7.3,4 L7,6.4 C6.6,7.6 5.6,8 4.4,8 C3,8 2.2,7.4 1.7,6.2Z" stroke="none"/><path d="M2.5,4.4 L2.1,1.9 M3.95,4 L3.85,0.9 M5.4,4 L5.6,1.1 M6.7,4.6 L7.2,2.5" stroke-width="1.25" fill="none"/><path d="M2.4,6.4 L0.8,4.5" stroke-width="1.3" fill="none"/></g>
<path d="M171.3,45.6 L178,42.7 L182.5,46.3 L182.5,53.6 L176.6,56.4 L171.3,53.3Z" fill="#fff" stroke="#3a3a3a" stroke-width="0.9" stroke-linejoin="round"/><path d="M171.3,45.6 L176.6,49.1 L182.5,46.3 M176.6,49.1 L176.6,56.4" fill="none" stroke="#3a3a3a" stroke-width="0.9"/>
<path d="M179.6,42.6 C184.6,42.4 187.8,44.4 188,47.4 L188.4,47.4 L186.4,50.9 L182.8,47.4 L185.2,47.4 C185,45.8 183.6,45.2 181.4,45.4Z" fill="#1e88f0"/>
<path d="M184.50,51.20 L188.50,53.12 L188.50,57.28 L184.50,59.20 L180.50,57.28 L180.50,53.12Z" fill="#fff" stroke="none"/><path d="M184.50,51.20 L188.50,53.12 L188.50,57.28 L184.50,59.20 L180.50,57.28 L180.50,53.12Z M180.50,53.12 L184.50,55.04 L188.50,53.12 M184.50,55.04 L184.50,59.20" fill="none" stroke="#3a3a3a" stroke-width="0.9" stroke-linejoin="round"/>
<path d="M204.50,47.00 L208.50,48.87 L208.50,52.93 L204.50,54.80 L200.50,52.93 L200.50,48.87Z" fill="#fff" stroke="none"/><path d="M204.50,47.00 L208.50,48.87 L208.50,52.93 L204.50,54.80 L200.50,52.93 L200.50,48.87Z M200.50,48.87 L204.50,50.74 L208.50,48.87 M204.50,50.74 L204.50,54.80" fill="none" stroke="#3a3a3a" stroke-width="0.9" stroke-linejoin="round"/>
<path d="M214.50,47.00 L218.50,48.87 L218.50,52.93 L214.50,54.80 L210.50,52.93 L210.50,48.87Z" fill="#fff" stroke="none"/><path d="M214.50,47.00 L218.50,48.87 L218.50,52.93 L214.50,54.80 L210.50,52.93 L210.50,48.87Z M210.50,48.87 L214.50,50.74 L218.50,48.87 M214.50,50.74 L214.50,54.80" fill="none" stroke="#3a3a3a" stroke-width="0.9" stroke-linejoin="round"/>
<path d="M209.5,42.8 L209.5,59.4" stroke="#2b99ff" stroke-width="1" stroke-dasharray="1.3,1.2"/>
<path d="M245.50,43.00 L253.50,46.89 L253.50,55.31 L245.50,59.20 L237.50,55.31 L237.50,46.89Z" fill="#fff" stroke="none"/><path d="M240.4,47.6 L240.4,54.4 L245.8,57 L251.2,54.4 L251.2,47.6 L245.8,45.2Z M240.4,54.4 L245.8,52 L251.2,54.4 M245.8,52 L245.8,45.2" fill="none" stroke="#7cc0ff" stroke-width="0.8"/><path d="M245.50,43.00 L253.50,46.89 L253.50,55.31 L245.50,59.20 L237.50,55.31 L237.50,46.89Z M237.50,46.89 L245.50,50.78 L253.50,46.89 M245.50,50.78 L245.50,59.20" fill="none" stroke="#3a3a3a" stroke-width="0.9" stroke-linejoin="round"/>
<path d="M275.50,43.00 L283.50,46.89 L283.50,55.31 L275.50,59.20 L267.50,55.31 L267.50,46.89Z" fill="#fff" stroke="none"/><path d="M271.6,44.2 L273.6,43.4 L280.6,57 L278.6,57.8Z" fill="#3aa0ff"/><path d="M275.50,43.00 L283.50,46.89 L283.50,55.31 L275.50,59.20 L267.50,55.31 L267.50,46.89Z M267.50,46.89 L275.50,50.78 L283.50,46.89 M275.50,50.78 L275.50,59.20" fill="none" stroke="#3a3a3a" stroke-width="0.9" stroke-linejoin="round"/>
<path d="M309.50,43.00 L317.50,46.89 L317.50,55.31 L309.50,59.20 L301.50,55.31 L301.50,46.89Z" fill="#fff" stroke="none"/><path d="M301.50,46.89 L309.50,50.78 L309.50,59.20 L301.50,55.31Z" fill="#7cc0ff"/><ellipse cx="313.6" cy="53" rx="2.6" ry="3.2" fill="#a8d4ff" stroke="#3a3a3a" stroke-width="0.6"/><path d="M309.50,43.00 L317.50,46.89 L317.50,55.31 L309.50,59.20 L301.50,55.31 L301.50,46.89Z M301.50,46.89 L309.50,50.78 L317.50,46.89 M309.50,50.78 L309.50,59.20" fill="none" stroke="#3a3a3a" stroke-width="0.9" stroke-linejoin="round"/>
<path d="M349.50,43.40 L357.50,47.19 L357.50,55.41 L349.50,59.20 L341.50,55.41 L341.50,47.19Z" fill="#9ccfff" stroke="none"/><path d="M349.50,43.40 L357.50,47.19 L357.50,55.41 L349.50,59.20 L341.50,55.41 L341.50,47.19Z M341.50,47.19 L349.50,50.98 L357.50,47.19 M349.50,50.98 L349.50,59.20" fill="none" stroke="#2b99ff" stroke-width="1.6" stroke-linejoin="round"/>
<path d="M349.50,46.40 L354.50,48.85 L354.50,54.15 L349.50,56.60 L344.50,54.15 L344.50,48.85Z" fill="#9ccfff" stroke="none"/><path d="M349.50,46.40 L354.50,48.85 L354.50,54.15 L349.50,56.60 L344.50,54.15 L344.50,48.85Z M344.50,48.85 L349.50,51.30 L354.50,48.85 M349.50,51.30 L349.50,56.60" fill="none" stroke="#3a3a3a" stroke-width="0.8" stroke-linejoin="round"/>
<path d="M374.5,45.2 L374.5,54 L381,58.9 L381,49.8Z M381,49.8 L382.4,48.6" fill="#fff" stroke="#3a3a3a" stroke-width="0.9" stroke-linejoin="round"/>
<path d="M386.50,42.80 L390.50,45.25 L390.50,50.55 L386.50,53.00 L382.50,50.55 L382.50,45.25Z" fill="#fff" stroke="none"/><path d="M386.50,42.80 L390.50,45.25 L390.50,50.55 L386.50,53.00 L382.50,50.55 L382.50,45.25Z M382.50,45.25 L386.50,47.70 L390.50,45.25 M386.50,47.70 L386.50,53.00" fill="none" stroke="#3a3a3a" stroke-width="0.9" stroke-linejoin="round"/>
<path d="M383,56.8 C386,56.8 387.4,55.8 387.6,54.6 L385.8,54.6 L389.6,50.8 L391.6,54.6 L390.6,54.6 C390.4,58 387,59.8 383,59.8Z" fill="#1e88f0"/>
<path d="M409.50,41.40 L415.50,45.19 L415.50,53.41 L409.50,57.20 L403.50,53.41 L403.50,45.19Z" fill="#fff" stroke="none"/><path d="M409.50,41.40 L415.50,45.19 L409.50,48.98 L403.50,45.19Z" fill="#6ab6ff"/><path d="M403.8,49 L409.3,51.6 L414.8,49" fill="none" stroke="#2b88e0" stroke-width="0.7"/><path d="M409.50,41.40 L415.50,45.19 L415.50,53.41 L409.50,57.20 L403.50,53.41 L403.50,45.19Z M403.50,45.19 L409.50,48.98 L415.50,45.19 M409.50,48.98 L409.50,57.20" fill="none" stroke="#3a3a3a" stroke-width="0.9" stroke-linejoin="round"/>
<path d="M413.6,57.6 L413.6,51.6" stroke="#f0202a" stroke-width="1.2"/><path d="M413.6,49.4 L415.8,52.4 L411.4,52.4Z" fill="#f0202a"/>
<path d="M403,62.6 L410,59.6 L417,62.6 L410,65.6Z" fill="#1e88f0" stroke="#333" stroke-width="0.6"/>
<path d="M403.4,70.6 L410,67.4 L416.6,70.6 L410,73.8Z" fill="#e8e8e8" stroke="#c8c8c8" stroke-width="0.6"/>
<path d="M414.2,74 L414.2,69" stroke="#f0202a" stroke-width="1.2"/><path d="M414.2,66.8 L416.4,69.8 L412,69.8Z" fill="#f0202a"/>
<path d="M404.6,79.2 L410.4,76.4 L416.2,79.2 L410.4,82Z" fill="#1e88f0" stroke="#333" stroke-width="0.6"/>
<path d="M403.4,80 L403.4,86.6 M417.2,80 L417.2,86.6 M403.4,80.4 L417.2,80.4" fill="none" stroke="#3aa0ff" stroke-width="0.8" stroke-dasharray="1.4,1"/>
<path d="M403.4,88.2 L410.4,85 L417.4,88.2 L410.4,91.6Z" fill="#fff" stroke="#222" stroke-width="0.8"/>
<path d="M489,44 C487,44 487.4,46 487.4,48 C487.4,50 486.6,50.8 485.6,51 C486.6,51.2 487.4,52 487.4,54 C487.4,56 487,58.4 489,58.4" fill="none" stroke="#a4a4a4" stroke-width="0.8"/>
<path d="M496.50,43.00 L501.50,45.16 L501.50,49.84 L496.50,52.00 L491.50,49.84 L491.50,45.16Z" fill="#fff" stroke="none"/><path d="M496.50,43.00 L501.50,45.16 L501.50,49.84 L496.50,52.00 L491.50,49.84 L491.50,45.16Z M491.50,45.16 L496.50,47.32 L501.50,45.16 M496.50,47.32 L496.50,52.00" fill="none" stroke="#a4a4a4" stroke-width="0.8" stroke-linejoin="round"/>
<path d="M493.50,49.80 L498.50,52.01 L498.50,56.79 L493.50,59.00 L488.50,56.79 L488.50,52.01Z" fill="#fff" stroke="none"/><path d="M493.50,49.80 L498.50,52.01 L498.50,56.79 L493.50,59.00 L488.50,56.79 L488.50,52.01Z M488.50,52.01 L493.50,54.22 L498.50,52.01 M493.50,54.22 L493.50,59.00" fill="none" stroke="#a4a4a4" stroke-width="0.8" stroke-linejoin="round"/>
<path d="M526.50,43.00 L532.50,45.78 L532.50,51.82 L526.50,54.60 L520.50,51.82 L520.50,45.78Z" fill="#a4a4a4" stroke="none"/><path d="M526.50,43.00 L532.50,45.78 L526.50,48.57 L520.50,45.78Z" fill="#b0b0b0"/><path d="M520.50,45.78 L526.50,48.57 L526.50,54.60 L520.50,51.82Z" fill="#8e8e8e"/><path d="M532.50,45.78 L526.50,48.57 L526.50,54.60 L532.50,51.82Z" fill="#9a9a9a"/><path d="M526.50,43.00 L532.50,45.78 L532.50,51.82 L526.50,54.60 L520.50,51.82 L520.50,45.78Z M520.50,45.78 L526.50,48.57 L532.50,45.78 M526.50,48.57 L526.50,54.60" fill="none" stroke="#8c8c8c" stroke-width="0.6" stroke-linejoin="round"/>
<path d="M520.50,47.60 L526.50,50.43 L526.50,56.57 L520.50,59.40 L514.50,56.57 L514.50,50.43Z" fill="#a4a4a4" stroke="none"/><path d="M520.50,47.60 L526.50,50.43 L520.50,53.26 L514.50,50.43Z" fill="#b0b0b0"/><path d="M514.50,50.43 L520.50,53.26 L520.50,59.40 L514.50,56.57Z" fill="#8e8e8e"/><path d="M526.50,50.43 L520.50,53.26 L520.50,59.40 L526.50,56.57Z" fill="#9a9a9a"/><path d="M520.50,47.60 L526.50,50.43 L526.50,56.57 L520.50,59.40 L514.50,56.57 L514.50,50.43Z M514.50,50.43 L520.50,53.26 L526.50,50.43 M520.50,53.26 L520.50,59.40" fill="none" stroke="#8c8c8c" stroke-width="0.6" stroke-linejoin="round"/>
<path d="M559.50,43.00 L564.50,45.30 L564.50,50.30 L559.50,52.60 L554.50,50.30 L554.50,45.30Z" fill="#fff" stroke="none"/><path d="M559.50,43.00 L564.50,45.30 L564.50,50.30 L559.50,52.60 L554.50,50.30 L554.50,45.30Z M554.50,45.30 L559.50,47.61 L564.50,45.30 M559.50,47.61 L559.50,52.60" fill="none" stroke="#3a3a3a" stroke-width="0.9" stroke-linejoin="round"/>
<path d="M551.50,49.60 L556.50,51.90 L556.50,56.90 L551.50,59.20 L546.50,56.90 L546.50,51.90Z" fill="#fff" stroke="none"/><path d="M551.50,49.60 L556.50,51.90 L556.50,56.90 L551.50,59.20 L546.50,56.90 L546.50,51.90Z M546.50,51.90 L551.50,54.21 L556.50,51.90 M551.50,54.21 L551.50,59.20" fill="none" stroke="#3a3a3a" stroke-width="0.9" stroke-linejoin="round"/>
<path d="M556,56.8 C559,56.8 560.4,55.8 560.6,54.6 L558.8,54.6 L562.6,50.8 L564.6,54.6 L563.6,54.6 C563.4,58 560,59.8 556,59.8Z" fill="#1e88f0"/>
<path d="M589.50,43.00 L597.50,46.98 L597.50,55.62 L589.50,59.60 L581.50,55.62 L581.50,46.98Z" fill="#fff" stroke="none"/><path d="M589.50,43.00 L597.50,46.98 L597.50,55.62 L589.50,59.60 L581.50,55.62 L581.50,46.98Z M581.50,46.98 L589.50,50.97 L597.50,46.98 M589.50,50.97 L589.50,59.60" fill="none" stroke="#3a3a3a" stroke-width="0.9" stroke-linejoin="round"/>
<text x="590.4" y="56" font-family="Liberation Sans, sans-serif" font-size="5" font-weight="bold" fill="#3aa0ff">A</text>
<g transform="rotate(-28 622 51)"><rect x="617" y="48.2" width="10.6" height="5.4" rx="1.4" fill="#d8d8d8" stroke="#3a3a3a" stroke-width="0.8"/><rect x="613.4" y="49.8" width="3.8" height="2.2" rx="1" fill="#eee" stroke="#3a3a3a" stroke-width="0.7"/><rect x="627.6" y="49.8" width="3" height="2.2" rx="1" fill="#eee" stroke="#3a3a3a" stroke-width="0.7"/></g>
<polygon points="629.80,55.40 628.53,56.45 628.69,58.09 627.05,57.93 626.00,59.20 624.95,57.93 623.31,58.09 623.47,56.45 622.20,55.40 623.47,54.35 623.31,52.71 624.95,52.87 626.00,51.60 627.05,52.87 628.69,52.71 628.53,54.35" fill="#ff9a10"/>
<path d="M672.5,43.0 L680.5,46.9 L680.5,55.3 L672.5,59.2 L664.5,55.3 L664.5,46.9Z" fill="#fff" stroke="#444" stroke-width="0.7"/>
<circle cx="672.5" cy="51.1" r="5.9" fill="#d4eaff" stroke="#2b99ff" stroke-width="1.2"/>
<path d="M672.5,51.1 L677.4,53.9" stroke="#2b99ff" stroke-width="0.8"/><path d="M672.5,51.1 L672.5,56.7" stroke="#2b99ff" stroke-width="0.8"/><path d="M672.5,51.1 L667.7,53.9" stroke="#2b99ff" stroke-width="0.8"/><path d="M672.5,51.1 L667.6,48.3" stroke="#2b99ff" stroke-width="0.8"/><path d="M672.5,51.1 L672.5,45.5" stroke="#2b99ff" stroke-width="0.8"/><path d="M672.5,51.1 L677.3,48.3" stroke="#2b99ff" stroke-width="0.8"/>
<circle cx="672.5" cy="51.1" r="3" fill="none" stroke="#2b99ff" stroke-width="0.8"/><circle cx="672.5" cy="51.1" r="1.2" fill="#555"/>
<path d="M716.5,43.0 L724.5,46.9 L724.5,55.3 L716.5,59.2 L708.5,55.3 L708.5,46.9Z" fill="#fff" stroke="#333" stroke-width="0.7"/>
<path d="M711,47.6 L716.5,45 L722,47.6 L722,55 L716.5,57.6 L711,55Z" fill="#6ab4ff"/>
<path d="M708.5,45.0 L716.5,48.6 L724.5,45.0 M708.5,47.0 L716.5,50.6 L724.5,47.0 M708.5,49.0 L716.5,52.6 L724.5,49.0 M708.5,51.0 L716.5,54.6 L724.5,51.0 M708.5,53.0 L716.5,56.6 L724.5,53.0 M708.5,55.0 L716.5,58.6 L724.5,55.0" fill="none" stroke="#2a2a2a" stroke-width="0.65"/>
<path d="M708.5,46.9 L716.5,43.4 L724.5,46.9" fill="none" stroke="#2a2a2a" stroke-width="0.6"/>
<path d="M764.5,43.0 L772.5,46.9 L772.5,55.3 L764.5,59.2 L756.5,55.3 L756.5,46.9Z" fill="#fff" stroke="#333" stroke-width="0.7"/>
<path d="M764.5,51.1 L764.5,43 M764.5,51.1 L764.5,59.2 M764.5,51.1 L756.5,46.888 M764.5,51.1 L772.5,46.888" stroke="#333" stroke-width="0.6"/>
<path d="M764.5,51.1 L768.6,44.8 M764.5,51.1 L758.4,55.6 M764.5,51.1 L771,55.4" stroke="#2a72c0" stroke-width="2.4" fill="none"/>
<path d="M811.50,45.60 L817.50,48.34 L817.50,54.26 L811.50,57.00 L805.50,54.26 L805.50,48.34Z" fill="#fff" stroke="none"/><path d="M811.50,45.60 L817.50,48.34 L817.50,54.26 L811.50,57.00 L805.50,54.26 L805.50,48.34Z M805.50,48.34 L811.50,51.07 L817.50,48.34 M811.50,51.07 L811.50,57.00" fill="none" stroke="#3a3a3a" stroke-width="0.9" stroke-linejoin="round"/>
<circle cx="805.6" cy="54.4" r="1.5" fill="#e8282a"/><circle cx="811.4" cy="57.6" r="1.5" fill="#e8282a"/><circle cx="817.8" cy="54.8" r="1.5" fill="#e8282a"/>
<path d="M844.50,47.40 L852.50,50.33 L852.50,56.67 L844.50,59.60 L836.50,56.67 L836.50,50.33Z" fill="#fff" stroke="none"/><path d="M844.50,47.40 L852.50,50.33 L852.50,56.67 L844.50,59.60 L836.50,56.67 L836.50,50.33Z M836.50,50.33 L844.50,53.26 L852.50,50.33 M844.50,53.26 L844.50,59.60" fill="none" stroke="#3a3a3a" stroke-width="0.9" stroke-linejoin="round"/>
<path d="M845.50,43.00 L850.50,45.16 L850.50,49.84 L845.50,52.00 L840.50,49.84 L840.50,45.16Z" fill="#fff" stroke="none"/><path d="M845.50,43.00 L850.50,45.16 L850.50,49.84 L845.50,52.00 L840.50,49.84 L840.50,45.16Z M840.50,45.16 L845.50,47.32 L850.50,45.16 M845.50,47.32 L845.50,52.00" fill="none" stroke="#3a3a3a" stroke-width="0.9" stroke-linejoin="round"/>
<polygon points="852.50,55.20 851.19,56.27 851.36,57.96 849.67,57.79 848.60,59.10 847.53,57.79 845.84,57.96 846.01,56.27 844.70,55.20 846.01,54.13 845.84,52.44 847.53,52.61 848.60,51.30 849.67,52.61 851.36,52.44 851.19,54.13" fill="#ff9a10"/>
<text x="892.2" y="46" font-family="Liberation Sans, sans-serif" font-size="3.6" font-weight="bold" fill="#9a9a9a" textLength="17" lengthAdjust="spacingAndGlyphs">CONCEPT</text>
<text x="895.4" y="49.2" font-family="Liberation Sans, sans-serif" font-size="2.8" fill="#b0b0b0" textLength="10.6" lengthAdjust="spacingAndGlyphs">LASER</text>
<path d="M893,52.4 L898,50.2 L908.4,51.4 L908.4,56 L903,58.4 L893,57Z M893,52.4 L903,53.8 L903,58.4 M903,53.8 L908.4,51.4" fill="#e4e4e4" stroke="#b0b0b0" stroke-width="0.6"/>
<path d="M928,9.4 L931.2,9.4" stroke="#333" stroke-width="1"/>
<path d="M956.4,7.6 L959.6,7.6 L959.6,10.6 L956.4,10.6Z M957.6,7.4 L957.6,6.2 L960.8,6.2 L960.8,9.2 L959.8,9.2" fill="none" stroke="#444" stroke-width="0.7"/>
<path d="M984,6 L988,10 M988,6 L984,10" stroke="#333" stroke-width="0.9"/>
<rect x="966" y="21.4" width="16.6" height="11.8" fill="#fff" stroke="#8cc6ff" stroke-width="1"/><rect x="965.5" y="21" width="17.6" height="3" fill="#1e88f0"/>
<circle cx="978.6" cy="33.6" r="3.2" fill="#fff" stroke="#444" stroke-width="1.3" stroke-dasharray="1.3,0.9"/><circle cx="978.6" cy="33.6" r="2.4" fill="#fff" stroke="#444" stroke-width="0.8"/><circle cx="978.6" cy="33.6" r="0.8" fill="#2b6fd0"/>
<path d="M989.4,30.2 L991.6,27.4 L993.8,30.2Z" fill="none" stroke="#555" stroke-width="0.7"/>
<g transform="translate(0,0.6)">
<defs><linearGradient id="lg" x1="0" y1="0" x2="0.3" y2="1"><stop offset="0" stop-color="#e8121a"/><stop offset="1" stop-color="#f4401a"/></linearGradient></defs><path d="M7,3 L9.2,5 L10.4,4.2 L14.4,6.8 L13,15.2 L5.2,11Z" fill="url(#lg)"/><path d="M8.4,10.8 L11,9.2 L11.4,10 L13,8.8 L12.2,11.4 L9.6,12Z" fill="#fff"/>
<path d="M20.2,5 L24.6,5 L26.8,7.2 L26.8,13.6 L20.2,13.6Z" fill="#1565c8"/><rect x="22.4" y="10" width="2.6" height="1.4" fill="#7ab8ff"/>
<path d="M31.6,6.2 L34.2,6.2 L35.0,7.2 L39.8,7.2 L38.800000000000004,13.2 L32.2,13.2Z" fill="#1e78e0"/>
<rect x="36.2" y="10" width="3.2" height="3.8" fill="#777" stroke="#fff" stroke-width="0.4"/>
<path d="M43.5,5 L51.5,5 L51.5,13.6 L43.5,13.6Z" fill="#2b99ff"/><rect x="45.2" y="5" width="4.6" height="3.2" fill="#fff"/><rect x="46.9" y="5.6" width="1.2" height="1.6" fill="#2b6fd0"/><rect x="45.2" y="10" width="4.6" height="3.6" fill="#fff"/><rect x="46.1" y="11" width="2.8" height="1" fill="#888"/>
<path d="M55.2,5 L63.2,5 L63.2,13.6 L55.2,13.6Z" fill="#2b99ff"/><rect x="56.900000000000006" y="5" width="4.6" height="3.2" fill="#fff"/><rect x="58.6" y="5.6" width="1.2" height="1.6" fill="#2b6fd0"/><rect x="56.900000000000006" y="10" width="4.6" height="3.6" fill="#fff"/><rect x="57.800000000000004" y="11" width="2.8" height="1" fill="#888"/>
<circle cx="61.4" cy="11.6" r="1.6" fill="#ddd" stroke="#666" stroke-width="0.6"/><path d="M62.6,12.8 L63.8,14" stroke="#666" stroke-width="0.8"/>
<path d="M68.3,1.8 L68.3,15.8" stroke="#e4e4e4" stroke-width="1"/>
<path d="M108.4,1.8 L108.4,15.8" stroke="#e4e4e4" stroke-width="1"/>
<path d="M146.4,1.8 L146.4,15.8" stroke="#e4e4e4" stroke-width="1"/>
<path d="M187.5,1.8 L187.5,15.8" stroke="#e4e4e4" stroke-width="1"/>
<path d="M72.2,6.2 L74.8,6.2 L75.60000000000001,7.2 L80.4,7.2 L79.4,13.2 L72.8,13.2Z" fill="#1e78e0"/>
<circle cx="78.4" cy="11.8" r="1.9" fill="#ddd" stroke="#666" stroke-width="0.6"/>
<path d="M84,5 L92,5 L92,13.6 L84,13.6Z" fill="#2b99ff"/><rect x="85.7" y="5" width="4.6" height="3.2" fill="#fff"/><rect x="87.4" y="5.6" width="1.2" height="1.6" fill="#2b6fd0"/><rect x="85.7" y="10" width="4.6" height="3.6" fill="#fff"/><rect x="86.6" y="11" width="2.8" height="1" fill="#888"/>
<circle cx="90.6" cy="11.8" r="1.9" fill="#ddd" stroke="#666" stroke-width="0.6"/>
<path d="M100.50,4.80 L104.50,6.86 L104.50,11.34 L100.50,13.40 L96.50,11.34 L96.50,6.86Z" fill="#fff" stroke="none"/><path d="M100.50,4.80 L104.50,6.86 L104.50,11.34 L100.50,13.40 L96.50,11.34 L96.50,6.86Z M96.50,6.86 L100.50,8.93 L104.50,6.86 M100.50,8.93 L100.50,13.40" fill="none" stroke="#555" stroke-width="0.7" stroke-linejoin="round"/>
<path d="M100.6,9.8 L104.2,13.6 M104.2,9.8 L100.6,13.6" stroke="#e8202a" stroke-width="1"/>
<path d="M112.8,8.6 L117,5.8 L117,7.6 C120,7.6 122,9 122.4,12 C121,10.4 119.6,9.8 117,9.9 L117,11.6Z" fill="#1e78e0"/>
<path d="M123.4,8.6 L125.8,8.6 L124.6,9.9Z" fill="#1e5cc0"/>
<path d="M137.6,8.6 L133.4,5.8 L133.4,7.6 C130.4,7.6 128.4,9 128,12 C129.4,10.4 130.8,9.8 133.4,9.9 L133.4,11.6Z" fill="#b0b0b0"/>
<path d="M140.2,8.6 L142.6,8.6 L141.4,9.9Z" fill="#b8b8b8"/>
<rect x="149.2" y="3" width="11.6" height="11.4" fill="#8cc4f8"/>
<path d="M155.50,5.00 L159.50,7.11 L159.50,11.69 L155.50,13.80 L151.50,11.69 L151.50,7.11Z" fill="#1e6cc8" stroke="none"/><path d="M155.50,5.00 L159.50,7.11 L155.50,9.22 L151.50,7.11Z" fill="#2b88e8"/><path d="M151.50,7.11 L155.50,9.22 L155.50,13.80 L151.50,11.69Z" fill="#1c64c0"/><path d="M159.50,7.11 L155.50,9.22 L155.50,13.80 L159.50,11.69Z" fill="#1858a8"/><path d="M155.50,5.00 L159.50,7.11 L159.50,11.69 L155.50,13.80 L151.50,11.69 L151.50,7.11Z M151.50,7.11 L155.50,9.22 L159.50,7.11 M155.50,9.22 L155.50,13.80" fill="none" stroke="#0c3c78" stroke-width="0.7" stroke-linejoin="round"/>
<path d="M155.6,9.6 L155.6,14.2 L156.8,13.2 L157.6,14.8 L158.4,14.4 L157.6,12.9 L159,12.8Z" fill="#222"/>
<path d="M167.0,9.6 L170.6,13.2" stroke="#ff9a10" stroke-width="1.5" stroke-linecap="round"/><circle cx="165.6" cy="8.2" r="2.6" fill="#ccc" stroke="#666" stroke-width="0.8"/>
<path d="M179.4,9.6 L183,13.2" stroke="#ff9a10" stroke-width="1.5" stroke-linecap="round"/><circle cx="178" cy="8.2" r="2.6" fill="#ccc" stroke="#666" stroke-width="0.8"/>
<path d="M174.2,10.4 L177.4,13.8 M177.4,10.4 L174.2,13.8" stroke="#e8202a" stroke-width="1"/>
<circle cx="194.2" cy="8" r="1.7" fill="#fff" stroke="#1e78e0" stroke-width="1.3"/><circle cx="197.8" cy="11.2" r="1.4" fill="#fff" stroke="#1e78e0" stroke-width="1.2"/>
</g>
<rect x="2.50" y="110.3" width="1.2" height="1.4" fill="#3c3c3c"/>
<rect x="4.55" y="110.3" width="1.2" height="1.4" fill="#3c3c3c"/>
<rect x="6.60" y="110.3" width="1.2" height="1.4" fill="#3c3c3c"/>
<rect x="8.65" y="110.3" width="1.2" height="1.4" fill="#3c3c3c"/>
<rect x="10.70" y="110.3" width="1.2" height="1.4" fill="#3c3c3c"/>
<rect x="12.75" y="110.3" width="1.2" height="1.4" fill="#3c3c3c"/>
<rect x="14.80" y="110.3" width="1.2" height="1.4" fill="#3c3c3c"/>
<rect x="16.85" y="110.3" width="1.2" height="1.4" fill="#3c3c3c"/>
<rect x="18.90" y="110.3" width="1.2" height="1.4" fill="#3c3c3c"/>
<path d="M3,205.2 L21,205.2" stroke="#dcdcdc" stroke-width="1"/>
<path d="M3,276.5 L21,276.5" stroke="#dcdcdc" stroke-width="1"/>
<path d="M3,390 L21,390" stroke="#dcdcdc" stroke-width="1"/>
<path d="M11.7,118.8 L4.7,134.2 L18.4,131.4Z" fill="#7cc242" stroke="#2e5c14" stroke-width="0.9" stroke-linejoin="round"/><path d="M13,126.8 L13,133.4 L14.6,132.1 L15.9,135.0 L17.2,134.4 L15.9,131.7 L18.2,131.6Z" fill="#1a1a1a" stroke="#fff" stroke-width="0.35"/>
<path d="M5.6,144.8 L17.2,140.8 L17.2,152.2 L7.4,156Z" fill="#7cc242" stroke="#2e5c14" stroke-width="0.9" stroke-linejoin="round"/><path d="M13,148.8 L13,155.4 L14.6,154.10000000000002 L15.9,157.0 L17.2,156.4 L15.9,153.70000000000002 L18.2,153.60000000000002Z" fill="#1a1a1a" stroke="#fff" stroke-width="0.35"/>
<path d="M3.6,178.4 C4,171 8,170.4 11,168 C13.6,165.6 14.6,162.8 18,162.4 L19.8,164.4 C16,166.4 15.6,168.6 14,171.4 C12.4,174 11.8,175.6 11.6,178.4Z" fill="#7cc242" stroke="#2e5c14" stroke-width="0.9" stroke-linejoin="round"/><path d="M13,170.8 L13,177.4 L14.6,176.10000000000002 L15.9,179.0 L17.2,178.4 L15.9,175.70000000000002 L18.2,175.60000000000002Z" fill="#1a1a1a" stroke="#fff" stroke-width="0.35"/>
<path d="M7,200.2 C2,196 2.6,185 11.3,185 C20,185 20.6,196 15.6,200.2Z" fill="#7cc242" stroke="#2e5c14" stroke-width="0.9" stroke-linejoin="round"/><path d="M11.3,185.4 L11.3,200 M7.6,186.6 C6.4,191 7,196 8.6,200 M15,186.6 C16.2,191 15.6,196 14,200" stroke="#2e5c14" stroke-width="0.8" fill="none"/><path d="M13,192.6 L13,199.2 L14.6,197.9 L15.9,200.79999999999998 L17.2,200.2 L15.9,197.5 L18.2,197.4Z" fill="#1a1a1a" stroke="#fff" stroke-width="0.35"/>
<rect x="3.4" y="212.8" width="16.2" height="12.6" fill="#7cc242" stroke="#2e5c14" stroke-width="0.9" stroke-linejoin="round"/><path d="M13,220.2 L18.4,225.8" stroke="#2a2a2a" stroke-width="3.4" stroke-linecap="round"/><path d="M13.5,220.7 L18.4,225.8" stroke="#fff" stroke-width="2" stroke-linecap="round"/>
<circle cx="14" cy="237.5" r="4.9" fill="#7cc242" stroke="#2e5c14" stroke-width="0.9" stroke-linejoin="round"/><circle cx="8" cy="243.7" r="4.9" fill="#7cc242" stroke="#2e5c14" stroke-width="0.9" stroke-linejoin="round"/><path d="M10.6,234.7 L5,240.29999999999998 L11.6,246.7 L17.4,240.89999999999998Z" fill="#7cc242"/><path d="M13,241.8 L18.8,248" stroke="#2a2a2a" stroke-width="3.4" stroke-linecap="round"/><path d="M13.5,242.3 L18.8,248" stroke="#fff" stroke-width="2" stroke-linecap="round"/>
<path d="M4,269.4 C10,268.6 15,264 18.6,256" fill="none" stroke="#2e5c14" stroke-width="3.2" stroke-linecap="round"/><path d="M4,269.4 C10,268.6 15,264 18.6,256" fill="none" stroke="#7cc242" stroke-width="1.6" stroke-linecap="round"/>
<path d="M12.4,264.2 L18.6,270" stroke="#2a2a2a" stroke-width="2.6" stroke-linecap="round"/><path d="M13,264.8 L18.4,269.8" stroke="#fff" stroke-width="1.2" stroke-linecap="round"/>
<rect x="3.4" y="283.8" width="16.2" height="12.4" fill="#7cc242" stroke="#2e5c14" stroke-width="0.9" stroke-linejoin="round"/><path d="M3.4,283.8 L7.6,296.2 L11.4,283.8 L15.4,296.2 L19.6,283.8" fill="none" stroke="#2e5c14" stroke-width="0.8"/><path d="M13,291.4 L18.4,296.8" stroke="#2a2a2a" stroke-width="3.4" stroke-linecap="round"/><path d="M13.5,291.9 L18.4,296.8" stroke="#fff" stroke-width="2" stroke-linecap="round"/>
<circle cx="14" cy="308.2" r="4.9" fill="#7cc242" stroke="#2e5c14" stroke-width="0.9" stroke-linejoin="round"/><circle cx="8" cy="314.4" r="4.9" fill="#7cc242" stroke="#2e5c14" stroke-width="0.9" stroke-linejoin="round"/><path d="M10.6,305.4 L5,311.0 L11.6,317.4 L17.4,311.59999999999997Z" fill="#7cc242"/><path d="M14,303.4 L14,313.0 M9.2,308.2 L18.8,308.2 M8,309.59999999999997 L8,319.2 M3.2,314.4 L12.8,314.4 M10.6,304.79999999999995 L17.4,311.59999999999997 M4.6,311.0 L11.4,317.79999999999995" stroke="#2e5c14" stroke-width="0.6" fill="none"/><path d="M13,312.8 L18.8,319" stroke="#2a2a2a" stroke-width="3.4" stroke-linecap="round"/><path d="M13.5,313.3 L18.8,319" stroke="#fff" stroke-width="2" stroke-linecap="round"/>
<path d="M3.6,329.8 L8,325.8 L11.4,328.8 L15.4,325.6 L19.6,329.40000000000003 L15.6,332.8 L19.2,336.40000000000003 L15,339.8 L11.4,336.40000000000003 L7.6,339.8 L3.6,336.2 L7.4,332.8Z" fill="#7cc242" stroke="#2e5c14" stroke-width="0.9" stroke-linejoin="round"/><path d="M5.6,327.8 L17.4,338.2 M17.4,327.6 L5.6,338.0" stroke="#2e5c14" stroke-width="0.8"/><path d="M12.6,333.6 L18.6,340.2" stroke="#2a2a2a" stroke-width="3.4" stroke-linecap="round"/><path d="M13.1,334.1 L18.6,340.2" stroke="#fff" stroke-width="2" stroke-linecap="round"/>
<circle cx="11.3" cy="355.4" r="7.8" fill="#7cc242" stroke="#2e5c14" stroke-width="0.9" stroke-linejoin="round"/><path d="M11.3,347.59999999999997 L11.3,363.2 M3.5,355.4 L19.1,355.4 M5.8,349.9 L16.8,360.9 M16.8,349.9 L5.8,360.9" stroke="#2e5c14" stroke-width="0.8"/><path d="M12.6,356.2 L18.8,362.59999999999997" stroke="#2a2a2a" stroke-width="3.4" stroke-linecap="round"/><path d="M13.1,356.7 L18.8,362.59999999999997" stroke="#fff" stroke-width="2" stroke-linecap="round"/>
<ellipse cx="11.3" cy="376.5" rx="5.3" ry="7.6" fill="#7cc242" stroke="#2e5c14" stroke-width="0.9" stroke-linejoin="round"/><path d="M11.3,368.9 L11.3,384.1 M6,376.5 L16.6,376.5 M7.6,371.1 L15,381.9 M15,371.1 L7.6,381.9" stroke="#2e5c14" stroke-width="0.8"/><path d="M12.6,377.3 L18.6,383.5" stroke="#2a2a2a" stroke-width="3.4" stroke-linecap="round"/><path d="M13.1,377.8 L18.6,383.5" stroke="#fff" stroke-width="2" stroke-linecap="round"/>
<path d="M11.50,395.00 L18.50,399.15 L18.50,408.15 L11.50,412.30 L4.50,408.15 L4.50,399.15Z" fill="#fff" stroke="none"/><path d="M11.50,395.00 L18.50,399.15 L11.50,403.30 L4.50,399.15Z" fill="#7cc242"/><path d="M11.50,395.00 L18.50,399.15 L18.50,408.15 L11.50,412.30 L4.50,408.15 L4.50,399.15Z M4.50,399.15 L11.50,403.30 L18.50,399.15 M11.50,403.30 L11.50,412.30" fill="none" stroke="#222" stroke-width="0.9" stroke-linejoin="round"/><path d="M13,403.6 L13,410.20000000000005 L14.6,408.90000000000003 L15.9,411.8 L17.2,411.20000000000005 L15.9,408.5 L18.2,408.40000000000003Z" fill="#1a1a1a" stroke="#fff" stroke-width="0.35"/>
<path d="M11.50,417.00 L18.50,421.06 L18.50,429.84 L11.50,433.90 L4.50,429.84 L4.50,421.06Z" fill="#fff" stroke="none"/><path d="M4.50,421.06 L11.50,425.11 L11.50,433.90 L4.50,429.84Z" fill="#7cc242"/><path d="M11.50,417.00 L18.50,421.06 L18.50,429.84 L11.50,433.90 L4.50,429.84 L4.50,421.06Z M4.50,421.06 L11.50,425.11 L18.50,421.06 M11.50,425.11 L11.50,433.90" fill="none" stroke="#222" stroke-width="0.9" stroke-linejoin="round"/><path d="M13,425.2 L13,431.8 L14.6,430.5 L15.9,433.4 L17.2,432.8 L15.9,430.09999999999997 L18.2,430.0Z" fill="#1a1a1a" stroke="#fff" stroke-width="0.35"/>
<path d="M11.50,438.60 L18.50,442.66 L18.50,451.44 L11.50,455.50 L4.50,451.44 L4.50,442.66Z" fill="#fff" stroke="none"/><path d="M11.50,438.60 L18.50,442.66 L11.50,446.71 L4.50,442.66Z" fill="#ff9a10"/><path d="M4.50,442.66 L11.50,446.71 L11.50,455.50 L4.50,451.44Z" fill="#7cc242"/><path d="M18.50,442.66 L11.50,446.71 L11.50,455.50 L18.50,451.44Z" fill="#1e88f0"/><path d="M11.50,438.60 L18.50,442.66 L18.50,451.44 L11.50,455.50 L4.50,451.44 L4.50,442.66Z M4.50,442.66 L11.50,446.71 L18.50,442.66 M11.50,446.71 L11.50,455.50" fill="none" stroke="#222" stroke-width="0.9" stroke-linejoin="round"/><path d="M13,446.8 L13,453.40000000000003 L14.6,452.1 L15.9,455.0 L17.2,454.40000000000003 L15.9,451.7 L18.2,451.6Z" fill="#1a1a1a" stroke="#fff" stroke-width="0.35"/>
<path d="M11.50,460.30 L18.50,464.36 L18.50,473.14 L11.50,477.20 L4.50,473.14 L4.50,464.36Z" fill="#fff" stroke="none"/><path d="M7,466 L11.4,475 L15.6,466Z" fill="#7cc242" stroke="#2e5c14" stroke-width="0.5"/><path d="M8.2,465.4 L14.4,465.4 L11.3,471.6Z" fill="#e8282a"/><path d="M4.1,472.9 L11.45,468.6 L18.8,472.9 M11.45,468.6 L11.45,460.3" stroke="#333" stroke-width="0.6" fill="none"/><path d="M11.50,460.30 L18.50,464.36 L18.50,473.14 L11.50,477.20 L4.50,473.14 L4.50,464.36Z M4.50,464.36 L11.50,468.41 L18.50,464.36 M11.50,468.41 L11.50,477.20" fill="none" stroke="#222" stroke-width="0.8" stroke-linejoin="round"/><path d="M13,468.6 L13,475.20000000000005 L14.6,473.90000000000003 L15.9,476.8 L17.2,476.20000000000005 L15.9,473.5 L18.2,473.40000000000003Z" fill="#1a1a1a" stroke="#fff" stroke-width="0.35"/>
<path d="M11.50,482.90 L18.50,486.76 L18.50,495.14 L11.50,499.00 L4.50,495.14 L4.50,486.76Z" fill="#fff" stroke="none"/><path d="M11.50,482.90 L18.50,486.76 L18.50,495.14 L11.50,499.00 L4.50,495.14 L4.50,486.76Z M4.50,486.76 L11.50,490.63 L18.50,486.76 M11.50,490.63 L11.50,499.00" fill="none" stroke="#b0b0b0" stroke-width="0.8" stroke-linejoin="round"/><path d="M13,490.6 L13,497.20000000000005 L14.6,495.90000000000003 L15.9,498.8 L17.2,498.20000000000005 L15.9,495.5 L18.2,495.40000000000003Z" fill="#b0b0b0" stroke="#fff" stroke-width="0.35"/>
<path d="M10,508.2 L11.6,509.6 L13.2,508.2 M10,510.6 L11.6,512 L13.2,510.6" fill="none" stroke="#333" stroke-width="0.9"/>
</svg>
<div class="a" style="left:741px;top:108px;width:3px;height:408px;background:#f8f8fb"></div>
<svg width="1000" height="531" viewBox="0 0 1000 531">
<defs><pattern id="grip" x="0" y="0" width="2" height="2" patternUnits="userSpaceOnUse"><rect x="0" y="0" width="1" height="1" fill="#b8b8b8"/><rect x="1" y="1" width="1" height="1" fill="#b8b8b8"/></pattern></defs>
<path d="M751,114.8 L755,118.0 L751,121.2Z" fill="#111"/>
<rect x="810.3" y="116.4" width="171.5" height="3.4" fill="url(#grip)"/>
<path d="M989.7,116.2 L992.9,119.4 M992.9,116.2 L989.7,119.4" stroke="#111" stroke-width="1.1" fill="none"/>
<path d="M744,142.5 L1000,142.5" stroke="#dadada" stroke-width="1" fill="none"/>
<rect x="745.5" y="129.5" width="46.6" height="13" fill="#fff" stroke="#c6c6c6" stroke-width="1"/>
<path d="M751,148.67000000000002 L755,151.87 L751,155.07Z" fill="#111"/>
<rect x="807.1" y="150.3" width="174.7" height="3.4" fill="url(#grip)"/>
<path d="M989.7,150.07 L992.9,153.27 M992.9,150.07 L989.7,153.27" stroke="#111" stroke-width="1.1" fill="none"/>
<path d="M744,176.37 L1000,176.37" stroke="#dadada" stroke-width="1" fill="none"/>
<rect x="745.5" y="163.37" width="47.2" height="13" fill="#fff" stroke="#c6c6c6" stroke-width="1"/>
<path d="M751,182.54000000000002 L755,185.74 L751,188.94Z" fill="#111"/>
<rect x="833.9" y="184.1" width="147.9" height="3.4" fill="url(#grip)"/>
<path d="M989.7,183.94 L992.9,187.14000000000001 M992.9,183.94 L989.7,187.14000000000001" stroke="#111" stroke-width="1.1" fill="none"/>
<path d="M744,210.24 L1000,210.24" stroke="#dadada" stroke-width="1" fill="none"/>
<rect x="745.5" y="197.24" width="45.1" height="13" fill="#fff" stroke="#c6c6c6" stroke-width="1"/>
<path d="M751,216.41 L755,219.60999999999999 L751,222.80999999999997Z" fill="#111"/>
<rect x="842.0" y="218.0" width="139.8" height="3.4" fill="url(#grip)"/>
<path d="M989.7,217.80999999999997 L992.9,221.01 M992.9,217.80999999999997 L989.7,221.01" stroke="#111" stroke-width="1.1" fill="none"/>
<path d="M744,244.10999999999999 L1000,244.10999999999999" stroke="#dadada" stroke-width="1" fill="none"/>
<rect x="745.5" y="231.10999999999999" width="48.7" height="13" fill="#fff" stroke="#c6c6c6" stroke-width="1"/>
<rect x="975.4" y="229.91" width="24.2" height="13.9" fill="#fff" stroke="#b4b4b4" stroke-width="0.9"/>
<path d="M987.3,229.91 L987.3,243.80999999999997" stroke="#b4b4b4" stroke-width="0.9"/>
<path d="M983.6,232.76 L979,236.66 L983.6,240.56Z" fill="#9c9c9c"/>
<path d="M991.2,232.56 L996,236.66 L991.2,240.76Z" fill="#000"/>
<path d="M751,250.28 L755,253.48 L751,256.68Z" fill="#111"/>
<rect x="803.5" y="251.9" width="178.3" height="3.4" fill="url(#grip)"/>
<path d="M989.7,251.67999999999998 L992.9,254.88 M992.9,251.67999999999998 L989.7,254.88" stroke="#111" stroke-width="1.1" fill="none"/>
<path d="M744,277.98 L1000,277.98" stroke="#dadada" stroke-width="1" fill="none"/>
<rect x="745.5" y="264.98" width="44.4" height="13" fill="#fff" stroke="#c6c6c6" stroke-width="1"/>
<rect x="975.4" y="263.78000000000003" width="24.2" height="13.9" fill="#fff" stroke="#b4b4b4" stroke-width="0.9"/>
<path d="M987.3,263.78000000000003 L987.3,277.68" stroke="#b4b4b4" stroke-width="0.9"/>
<path d="M983.6,266.63000000000005 L979,270.53000000000003 L983.6,274.43Z" fill="#9c9c9c"/>
<path d="M991.2,266.43 L996,270.53000000000003 L991.2,274.63000000000005Z" fill="#000"/>
<path d="M741,308.3 L743.2,310 L741,311.7Z M741,312.6 L743.2,314.3 L741,316Z" fill="#222"/>
</svg>
<span class="t" style="left:765.5px;top:114.00px;font-size:8.5px;line-height:8.5px;color:#222;transform:scaleX(0.928);">View Pages</span>
<span class="t" style="left:758.8px;top:131.00px;font-size:8.5px;line-height:8.5px;color:#222;transform:scaleX(0.963);">View</span>
<span class="t" style="left:800.7px;top:132.00px;font-size:8.5px;line-height:8.5px;color:#222;transform:scaleX(0.963);">Multi-Section</span>
<span class="t" style="left:871.1px;top:132.00px;font-size:8.5px;line-height:8.5px;color:#222;transform:scaleX(0.873);">Slices</span>
<span class="t" style="left:921.0px;top:132.00px;font-size:8.5px;line-height:8.5px;color:#222;transform:scaleX(0.959);">Grid</span>
<span class="t" style="left:765.5px;top:148.00px;font-size:8.5px;line-height:8.5px;color:#222;transform:scaleX(0.913);">Part Pages</span>
<span class="t" style="left:753.5px;top:165.00px;font-size:8.5px;line-height:8.5px;color:#222;transform:scaleX(0.949);">Part List</span>
<span class="t" style="left:801.7px;top:166.00px;font-size:8.5px;line-height:8.5px;color:#222;transform:scaleX(1.002);">Part Info</span>
<span class="t" style="left:852.5px;top:166.00px;font-size:8.5px;line-height:8.5px;color:#222;transform:scaleX(0.997);">Part Fixing Info</span>
<span class="t" style="left:928.8px;top:166.00px;font-size:8.5px;line-height:8.5px;color:#222;transform:scaleX(0.861);">Scenes</span>
<span class="t" style="left:765.5px;top:182.00px;font-size:8.5px;line-height:8.5px;color:#222;transform:scaleX(0.958);">Annotation Pages</span>
<span class="t" style="left:758.8px;top:199.00px;font-size:8.5px;line-height:8.5px;color:#222;transform:scaleX(1.033);">Text</span>
<span class="t" style="left:799.2px;top:200.00px;font-size:8.5px;line-height:8.5px;color:#222;transform:scaleX(0.998);">Drawing</span>
<span class="t" style="left:848.9px;top:200.00px;font-size:8.5px;line-height:8.5px;color:#222;transform:scaleX(0.963);">Attachments</span>
<span class="t" style="left:914.1px;top:200.00px;font-size:8.5px;line-height:8.5px;color:#222;transform:scaleX(0.956);">Textures</span>
<span class="t" style="left:765.5px;top:216.00px;font-size:8.5px;line-height:8.5px;color:#222;transform:scaleX(0.927);">Measurement Pages</span>
<span class="t" style="left:753.5px;top:233.00px;font-size:8.5px;line-height:8.5px;color:#222;transform:scaleX(0.925);">Distance</span>
<span class="t" style="left:802.8px;top:234.00px;font-size:8.5px;line-height:8.5px;color:#222;transform:scaleX(0.915);">Radius</span>
<span class="t" style="left:846.8px;top:234.00px;font-size:8.5px;line-height:8.5px;color:#222;transform:scaleX(0.938);">Angle</span>
<span class="t" style="left:886.2px;top:234.00px;font-size:8.5px;line-height:8.5px;color:#222;transform:scaleX(1.065);">Info</span>
<span class="t" style="left:920.1px;top:234.00px;font-size:8.5px;line-height:8.5px;color:#222;transform:scaleX(0.946);">Final Part</span>
<span class="t" style="left:973.2px;top:233.61px;font-size:8.5px;line-height:8.5px;color:#222;width:2px;overflow:hidden">Inspection</span>
<span class="t" style="left:765.5px;top:250.00px;font-size:8.5px;line-height:8.5px;color:#222;transform:scaleX(0.908);">Fix Pages</span>
<span class="t" style="left:753.5px;top:266.00px;font-size:8.5px;line-height:8.5px;color:#222;transform:scaleX(1.031);">Autofix</span>
<span class="t" style="left:798.7px;top:268.00px;font-size:8.5px;line-height:8.5px;color:#222;transform:scaleX(0.900);">Basic</span>
<span class="t" style="left:835.6px;top:268.00px;font-size:8.5px;line-height:8.5px;color:#222;transform:scaleX(0.961);">Hole</span>
<span class="t" style="left:871.6px;top:268.00px;font-size:8.5px;line-height:8.5px;color:#222;transform:scaleX(0.977);">Triangle</span>
<span class="t" style="left:920.1px;top:268.00px;font-size:8.5px;line-height:8.5px;color:#222;transform:scaleX(0.910);">Shell</span>
<span class="t" style="left:956.6px;top:267.48px;font-size:8.5px;line-height:8.5px;color:#222;width:18.4px;overflow:hidden;transform:scaleX(0.955)">Overlap</span>
<span class="t" style="left:452.6px;top:6.00px;font-size:9.2px;line-height:9.2px;color:#2a2a2a;transform:scaleX(0.991);">Magics 20.03 - Untitl...</span>
<span class="t" style="left:204.0px;top:6.00px;font-size:8.4px;line-height:8.4px;color:#9a9a9a;transform:scaleX(0.965);">Quick search (Shift+Q)</span>
<span class="t" style="left:10.0px;top:26.00px;font-size:8.4px;line-height:8.4px;color:#fff;transform:scaleX(0.792);">FILE</span>
<span class="t" style="left:44.5px;top:26.00px;font-size:8.4px;line-height:8.4px;color:#2b8be0;transform:scaleX(0.868);">TOOLS</span>
<span class="t" style="left:84.0px;top:26.00px;font-size:8.4px;line-height:8.4px;color:#444;transform:scaleX(0.806);">FIX</span>
<span class="t" style="left:110.0px;top:26.00px;font-size:8.4px;line-height:8.4px;color:#444;transform:scaleX(0.803);">TEXTURE</span>
<span class="t" style="left:157.4px;top:26.00px;font-size:8.4px;line-height:8.4px;color:#444;transform:scaleX(0.890);">POSITION</span>
<span class="t" style="left:208.4px;top:26.00px;font-size:8.4px;line-height:8.4px;color:#444;transform:scaleX(0.877);">BUILD PREPARATION</span>
<span class="t" style="left:299.4px;top:26.00px;font-size:8.4px;line-height:8.4px;color:#444;transform:scaleX(0.880);">SUPPORT GENERATION</span>
<span class="t" style="left:404.0px;top:26.00px;font-size:8.4px;line-height:8.4px;color:#444;transform:scaleX(0.897);">ANALYZE &amp; REPORT</span>
<span class="t" style="left:496.4px;top:26.00px;font-size:8.4px;line-height:8.4px;color:#444;transform:scaleX(0.895);">SLICING</span>
<span class="t" style="left:541.0px;top:26.00px;font-size:8.4px;line-height:8.4px;color:#444;transform:scaleX(0.906);">VIEW</span>
<span class="t" style="left:578.0px;top:26.00px;font-size:8.4px;line-height:8.4px;color:#444;transform:scaleX(0.917);">OPTIONS &amp; HELP</span>
<span class="t" style="left:4.8px;top:73.00px;font-size:8.2px;line-height:8.2px;color:#444;transform:scaleX(0.925);">Create</span>
<span class="t" style="left:32.3px;top:73.00px;font-size:8.2px;line-height:8.2px;color:#444;transform:scaleX(0.965);">Duplicate</span>
<span class="t" style="left:77.4px;top:73.00px;font-size:8.2px;line-height:8.2px;color:#444;transform:scaleX(1.004);">Interactive</span>
<span class="t" style="left:79.6px;top:84.00px;font-size:8.2px;line-height:8.2px;color:#444;transform:scaleX(0.907);">Translate</span>
<span class="t" style="left:122.1px;top:73.00px;font-size:8.2px;line-height:8.2px;color:#444;transform:scaleX(0.993);">Interactive</span>
<span class="t" style="left:127.9px;top:84.00px;font-size:8.2px;line-height:8.2px;color:#444;transform:scaleX(0.950);">Rotate</span>
<span class="t" style="left:166.0px;top:73.00px;font-size:8.2px;line-height:8.2px;color:#444;transform:scaleX(0.882);">Rescale</span>
<span class="t" style="left:198.8px;top:73.00px;font-size:8.2px;line-height:8.2px;color:#444;transform:scaleX(1.040);">Mirror</span>
<span class="t" style="left:233.1px;top:73.00px;font-size:8.2px;line-height:8.2px;color:#444;transform:scaleX(1.018);">Hollow</span>
<span class="t" style="left:238.6px;top:84.00px;font-size:8.2px;line-height:8.2px;color:#444;transform:scaleX(0.965);">Part</span>
<span class="t" style="left:263.7px;top:73.00px;font-size:8.2px;line-height:8.2px;color:#444;transform:scaleX(0.988);">Cut or</span>
<span class="t" style="left:263.7px;top:84.00px;font-size:8.2px;line-height:8.2px;color:#444;transform:scaleX(0.949);">Punch</span>
<span class="t" style="left:291.8px;top:73.00px;font-size:8.2px;line-height:8.2px;color:#444;transform:scaleX(0.973);">Perforator</span>
<span class="t" style="left:333.8px;top:73.00px;font-size:8.2px;line-height:8.2px;color:#444;transform:scaleX(0.991);">Hull and</span>
<span class="t" style="left:340.0px;top:84.00px;font-size:8.2px;line-height:8.2px;color:#444;transform:scaleX(0.951);">Core</span>
<span class="t" style="left:369.6px;top:73.00px;font-size:8.2px;line-height:8.2px;color:#444;transform:scaleX(0.932);">Surface</span>
<span class="t" style="left:369.6px;top:84.00px;font-size:8.2px;line-height:8.2px;color:#444;transform:scaleX(0.963);">to Solid</span>
<span class="t" style="left:420.6px;top:48.00px;font-size:8.2px;line-height:8.2px;color:#444;transform:scaleX(0.932);">Extrude</span>
<span class="t" style="left:420.6px;top:65.00px;font-size:8.2px;line-height:8.2px;color:#444;transform:scaleX(0.979);">Offset</span>
<span class="t" style="left:420.6px;top:82.00px;font-size:8.2px;line-height:8.2px;color:#444;transform:scaleX(1.022);">Milling Offset</span>
<span class="t" style="left:481.6px;top:73.00px;font-size:8.2px;line-height:8.2px;color:#9e9e9e;transform:scaleX(0.979);">Merge</span>
<span class="t" style="left:484.0px;top:84.00px;font-size:8.2px;line-height:8.2px;color:#9e9e9e;transform:scaleX(0.909);">Parts</span>
<span class="t" style="left:509.1px;top:73.00px;font-size:8.2px;line-height:8.2px;color:#9e9e9e;transform:scaleX(0.928);">Boolean</span>
<span class="t" style="left:544.5px;top:73.00px;font-size:8.2px;line-height:8.2px;color:#444;transform:scaleX(0.939);">Shells</span>
<span class="t" style="left:541.4px;top:84.00px;font-size:8.2px;line-height:8.2px;color:#444;transform:scaleX(0.899);">To Parts</span>
<span class="t" style="left:579.7px;top:73.00px;font-size:8.2px;line-height:8.2px;color:#444;transform:scaleX(0.902);">Label</span>
<span class="t" style="left:614.2px;top:73.00px;font-size:8.2px;line-height:8.2px;color:#444;transform:scaleX(0.947);">Prop</span>
<span class="t" style="left:602.7px;top:84.00px;font-size:8.2px;line-height:8.2px;color:#444;transform:scaleX(0.965);">Generation</span>
<span class="t" style="left:654.0px;top:73.00px;font-size:8.2px;line-height:8.2px;color:#444;transform:scaleX(0.965);">Structures</span>
<span class="t" style="left:696.2px;top:73.00px;font-size:8.2px;line-height:8.2px;color:#444;transform:scaleX(0.911);">Slice Based</span>
<span class="t" style="left:697.9px;top:84.00px;font-size:8.2px;line-height:8.2px;color:#444;transform:scaleX(0.950);">Structures</span>
<span class="t" style="left:741.8px;top:73.00px;font-size:8.2px;line-height:8.2px;color:#444;transform:scaleX(0.955);">DSM Somos</span>
<span class="t" style="left:746.4px;top:84.00px;font-size:8.2px;line-height:8.2px;color:#444;transform:scaleX(0.940);">TetraShell</span>
<span class="t" style="left:798.2px;top:73.00px;font-size:8.2px;line-height:8.2px;color:#444;transform:scaleX(0.983);">Rapidfit</span>
<span class="t" style="left:831.7px;top:73.00px;font-size:8.2px;line-height:8.2px;color:#444;transform:scaleX(0.975);">FormFit</span>
<span class="t" style="left:871.3px;top:73.00px;font-size:8.2px;line-height:8.2px;color:#9e9e9e;transform:scaleX(0.962);">Remove Volume</span>
<span class="t" style="left:887.8px;top:84.00px;font-size:8.2px;line-height:8.2px;color:#9e9e9e;transform:scaleX(0.974);">Wizard</span>
<span class="t" style="left:25.2px;top:97.00px;font-size:8.2px;line-height:8.2px;color:#444;transform:scaleX(0.941);">Create</span>
<span class="t" style="left:136.0px;top:97.00px;font-size:8.2px;line-height:8.2px;color:#444;transform:scaleX(0.957);">Position</span>
<span class="t" style="left:345.4px;top:97.00px;font-size:8.2px;line-height:8.2px;color:#444;transform:scaleX(0.936);">Edit</span>
<span class="t" style="left:494.7px;top:97.00px;font-size:8.2px;line-height:8.2px;color:#444;transform:scaleX(0.995);">Merge &amp; Boolean</span>
<span class="t" style="left:596.2px;top:97.00px;font-size:8.2px;line-height:8.2px;color:#444;transform:scaleX(0.939);">Generate</span>
<span class="t" style="left:702.7px;top:97.00px;font-size:8.2px;line-height:8.2px;color:#444;transform:scaleX(0.950);">Structures</span>
<span class="t" style="left:814.7px;top:97.00px;font-size:8.2px;line-height:8.2px;color:#444;transform:scaleX(0.981);">Fit2Ship</span>
<span class="t" style="left:875.5px;top:97.00px;font-size:8.2px;line-height:8.2px;color:#444;transform:scaleX(0.941);">Concept Laser</span>
<span class="t" style="left:3.0px;top:520.00px;font-size:9.2px;line-height:9.2px;color:#fff;transform:scaleX(0.935);">Ready</span>
</body></html>
